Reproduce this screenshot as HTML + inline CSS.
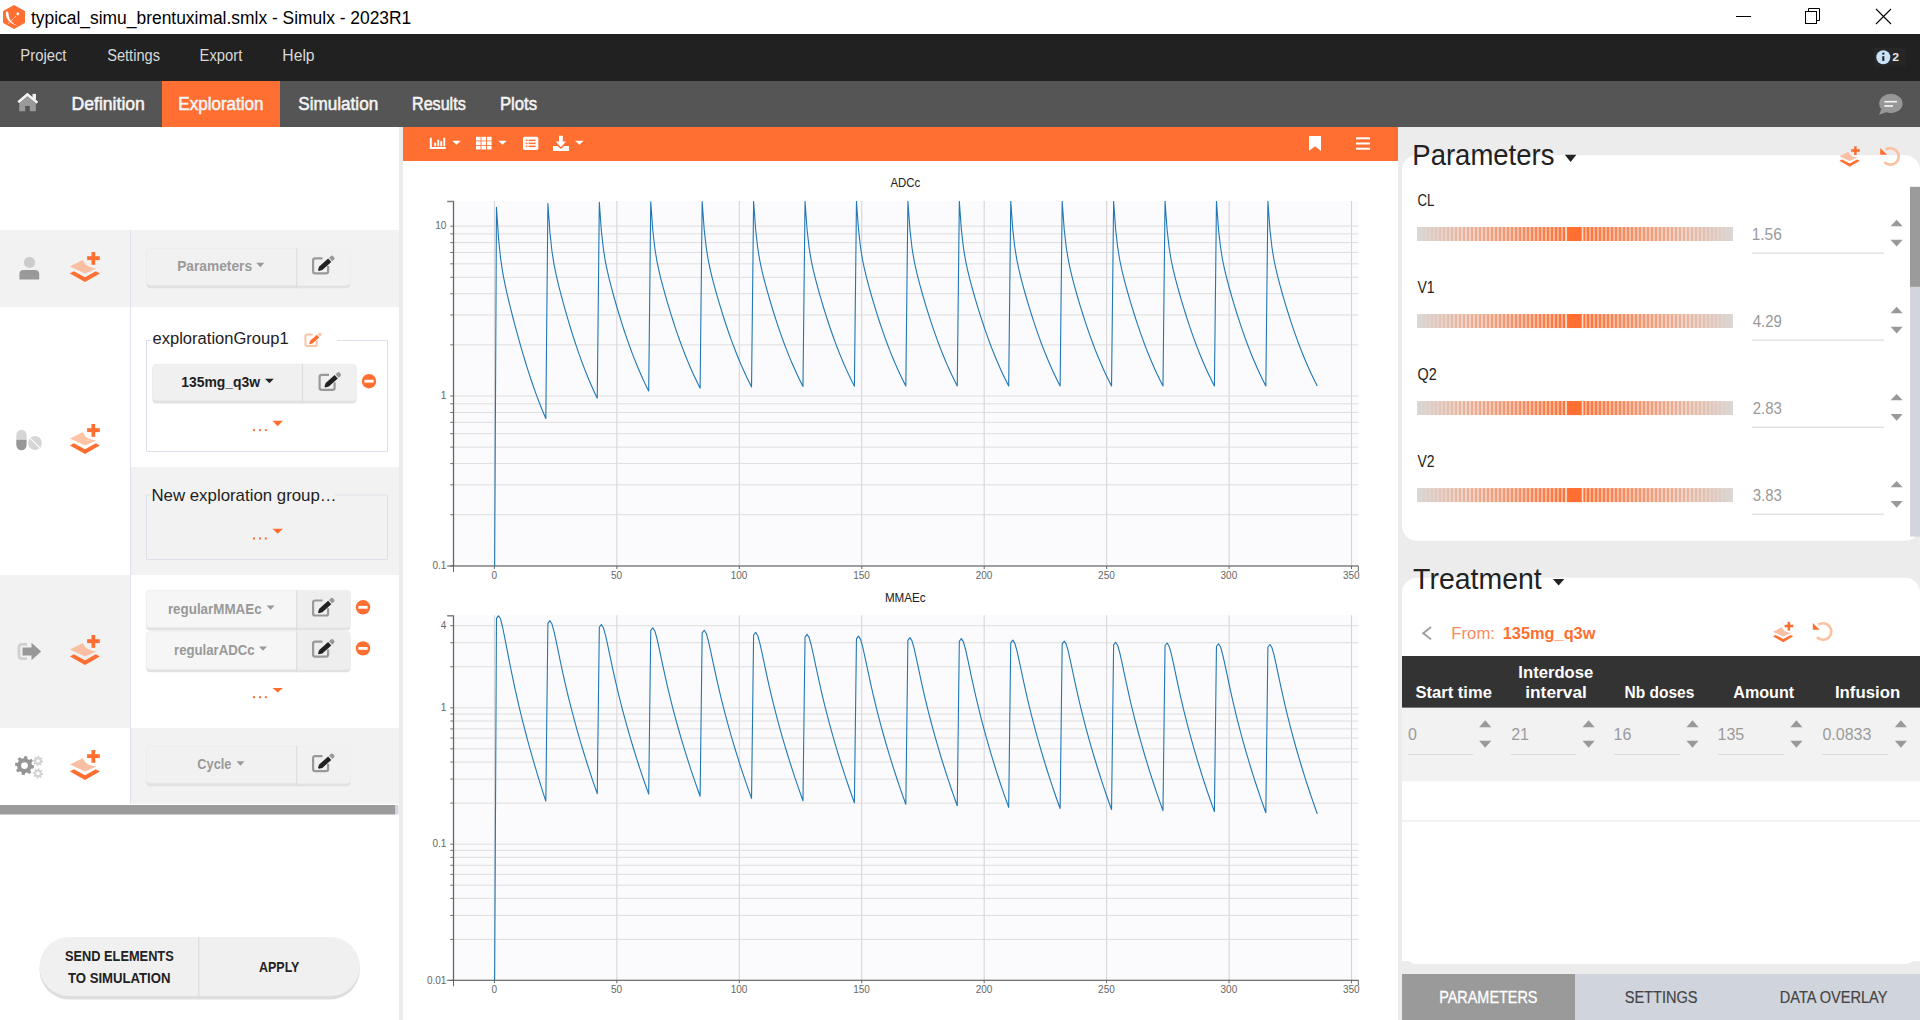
<!DOCTYPE html>
<html><head><meta charset="utf-8"><title>Simulx - Exploration</title>
<style>
html,body{margin:0;padding:0;width:1920px;height:1020px;overflow:hidden;background:#fff}
svg{position:absolute;left:0;top:0;font-family:"Liberation Sans",sans-serif}
</style></head><body>
<svg width="1920" height="1020" viewBox="0 0 1920 1020">
<polygon points="14,5.5 24.5,11.3 24.5,22.7 14,28.5 3.5,22.7 3.5,11.3" fill="#ff6f32" stroke="#ff6f32" stroke-width="1" stroke-linejoin="round"/>
<path d="M5.9,12.8 C5.5,18.5 9,23.8 18.6,26.0 C11.8,23.6 8.9,19.5 8.5,13.2 C8.4,11.3 6.1,11.0 5.9,12.8 Z" fill="#fff"/>
<line x1="7.9" y1="23.9" x2="16.2" y2="16.0" stroke="#fff" stroke-width="0.8" stroke-dasharray="1.2,0.8"/>
<circle cx="17.8" cy="13.9" r="1.4" fill="#fff"/>
<line x1="1736" y1="16.5" x2="1751" y2="16.5" stroke="#000" stroke-width="1"/>
<rect x="1805.5" y="11.5" width="11" height="12" fill="none" stroke="#000" stroke-width="1"/>
<path d="M1808.5,11.5 V8.5 H1819.5 V20.5 H1816.5" fill="none" stroke="#000" stroke-width="1"/>
<path d="M1876,9 L1891,24 M1891,9 L1876,24" stroke="#000" stroke-width="1.1"/>
<rect x="0" y="34" width="1920" height="47" fill="#212121"/>
<rect x="1874" y="47.5" width="32" height="19" fill="#262626"/>
<circle cx="1883.3" cy="57.2" r="7" fill="#c7e3f5"/>
<rect x="1882.25" y="56.2" width="2.1" height="4.7" fill="#222"/>
<circle cx="1883.3" cy="53.7" r="1.15" fill="#222"/>
<rect x="0" y="81" width="1920" height="46" fill="#555555"/>
<rect x="162" y="81" width="118" height="46" fill="#ff6f32"/>
<path d="M19.2,103.6 L27.4,96.4 L35.9,103.6 V111.3 H29.8 V105.9 H25.2 V111.3 H19.2 Z" fill="#9a9a9a"/>
<rect x="32.5" y="93.9" width="3.5" height="5.6" fill="#f2f2f2"/>
<path d="M18.3,102.3 L27.4,94.5 L37.4,102.8" fill="none" stroke="#f4f4f4" stroke-width="2.7"/>
<ellipse cx="1890.9" cy="103.5" rx="11.7" ry="9.7" fill="#979797"/>
<path d="M1881.5,108.5 L1879.2,114.8 L1887.5,111.8 Z" fill="#979797"/>
<rect x="1884.4" y="100.9" width="12.6" height="1.6" fill="#f4f4f4"/><rect x="1884.4" y="105.1" width="8.6" height="1.7" fill="#f4f4f4"/>
<rect x="0" y="127" width="399" height="893" fill="#ffffff"/>
<rect x="399" y="127" width="4" height="893" fill="#ebebeb"/>
<rect x="0" y="230" width="399" height="77" fill="#f2f2f2"/>
<rect x="131" y="467" width="268" height="108" fill="#f2f2f2"/>
<rect x="0" y="575" width="130" height="153" fill="#f2f2f2"/>
<rect x="131" y="728" width="268" height="76" fill="#f2f2f2"/>
<rect x="130" y="230" width="1" height="574" fill="#dfe2ea"/>
<rect x="0" y="805" width="395" height="9.5" fill="#9b9b9b"/>
<rect x="395" y="805" width="3.5" height="9.5" fill="#d2d6de"/>
<circle cx="29.5" cy="262.4" r="5.6" fill="#cccccc"/>
<path d="M19.4,279.6 V274 C19.4,271.6 21,270 23.4,270 H35.2 C37.6,270 39.2,271.6 39.2,274 V279.6 Z" fill="#999"/>
<g transform="translate(70,252) scale(1.0)"><rect x="21.5" y="0" width="3.7" height="12.8" fill="#ff6f32"/><rect x="17.1" y="4.2" width="12.7" height="3.9" fill="#ff6f32"/><path d="M-0.1,14.6 L12.9,8.1 C14.5,12.5 18,15.8 26.5,16.4 L15,21.6 Z" fill="#f8bfa3"/><path d="M-0.1,21.4 L3.8,19.3 L15,25.3 L25.8,19.3 L29.8,21.4 L15,30 Z" fill="#ff6f32"/></g>
<rect x="146.5" y="251.3" width="203.8" height="37.0" rx="4" fill="#e2e2e2"/>
<rect x="146.5" y="248.3" width="203.8" height="37.0" rx="4" fill="#f1f1f1" stroke="#e9e9e9" stroke-width="0.6"/>
<path d="M296.1,248.3 H346.3 A4,4 0 0 1 350.3,252.3 V281.3 A4,4 0 0 1 346.3,285.3 H296.1 Z" fill="#f1f1f1"/>
<rect x="296.1" y="248.3" width="1.2" height="40.0" fill="#dedede"/>
<path d="M256.3,262.85 H264.3 L260.3,267.15 Z" fill="#999"/>
<g transform="translate(312,257.2) scale(1.0)"><path d="M10.5,1.1 H3.2 Q1.1,1.1 1.1,3.2 V14 Q1.1,16.1 3.2,16.1 H14 Q16.1,16.1 16.1,14 V8.8" fill="none" stroke="#999" stroke-width="2.2"/><path d="M6.80,13.75 L10.35,12.91 L19.27,4.88 L16.13,1.38 L7.21,9.41 L6.00,12.85 Z" fill="#222"/><path d="M20.16,4.08 L22.24,2.20 Q23.28,1.27 21.71,-0.48 Q20.14,-2.23 19.10,-1.29 L17.02,0.58 Z" fill="#999"/></g>
<path d="M151,340.5 H146.5 V451.5 H387.5 V340.5 H337" fill="none" stroke="#dde0e8" stroke-width="1"/>
<g transform="translate(304.6,333.7) scale(0.76)"><path d="M10.5,1.1 H3.2 Q1.1,1.1 1.1,3.2 V14 Q1.1,16.1 3.2,16.1 H14 Q16.1,16.1 16.1,14 V8.8" fill="none" stroke="#fcc3a8" stroke-width="2.6"/><path d="M6.80,13.75 L10.35,12.91 L19.27,4.88 L16.13,1.38 L7.21,9.41 L6.00,12.85 Z" fill="#ff6f32"/><path d="M20.16,4.08 L22.24,2.20 Q23.28,1.27 21.71,-0.48 Q20.14,-2.23 19.10,-1.29 L17.02,0.58 Z" fill="#fcc3a8"/></g>
<rect x="152.5" y="367.1" width="204.0" height="36.5" rx="4" fill="#e2e2e2"/>
<rect x="152.5" y="364.1" width="204.0" height="36.5" rx="4" fill="#f0f0f0" stroke="#e9e9e9" stroke-width="0.6"/>
<path d="M301.8,364.1 H352.5 A4,4 0 0 1 356.5,368.1 V396.6 A4,4 0 0 1 352.5,400.6 H301.8 Z" fill="#f0f0f0"/>
<rect x="301.8" y="364.1" width="1.2" height="39.5" fill="#dedede"/>
<path d="M265.0,378.8 H273.79999999999995 L269.4,383.2 Z" fill="#222"/>
<g transform="translate(318.5,373.7) scale(1.0)"><path d="M10.5,1.1 H3.2 Q1.1,1.1 1.1,3.2 V14 Q1.1,16.1 3.2,16.1 H14 Q16.1,16.1 16.1,14 V8.8" fill="none" stroke="#999" stroke-width="2.2"/><path d="M6.80,13.75 L10.35,12.91 L19.27,4.88 L16.13,1.38 L7.21,9.41 L6.00,12.85 Z" fill="#222"/><path d="M20.16,4.08 L22.24,2.20 Q23.28,1.27 21.71,-0.48 Q20.14,-2.23 19.10,-1.29 L17.02,0.58 Z" fill="#999"/></g>
<circle cx="369" cy="381.2" r="7.2" fill="#ff6f32"/><rect x="364.4" y="379.8" width="9.2" height="2.8" fill="#fff"/>
<rect x="253.0" y="429.1" width="2" height="2" fill="#ff6f32"/>
<rect x="258.9" y="429.1" width="2" height="2" fill="#ff6f32"/>
<rect x="264.8" y="429.1" width="2" height="2" fill="#ff6f32"/>
<path d="M272.4,420.75 H283.0 L277.7,426.25 Z" fill="#ff6f32"/>
<path d="M16.3,435 A5.15,5.15 0 0 1 26.6,435 V439.7 H16.3 Z" fill="#d6d6d6"/>
<path d="M16.3,439.7 H26.6 V445 A5.15,5.15 0 0 1 16.3,445 Z" fill="#979797"/>
<circle cx="35" cy="443" r="6.9" fill="#d6d6d6"/>
<line x1="30.3" y1="438.3" x2="39.7" y2="447.7" stroke="#fff" stroke-width="1.1"/>
<g transform="translate(70,424) scale(1.0)"><rect x="21.5" y="0" width="3.7" height="12.8" fill="#ff6f32"/><rect x="17.1" y="4.2" width="12.7" height="3.9" fill="#ff6f32"/><path d="M-0.1,14.6 L12.9,8.1 C14.5,12.5 18,15.8 26.5,16.4 L15,21.6 Z" fill="#ffc4a8"/><path d="M-0.1,21.4 L3.8,19.3 L15,25.3 L25.8,19.3 L29.8,21.4 L15,30 Z" fill="#ff6f32"/></g>
<path d="M151,495 H146.5 V559.5 H387.5 V495 H335" fill="none" stroke="#dde0e8" stroke-width="1"/>
<rect x="253.0" y="537.5" width="2" height="2" fill="#ff6f32"/>
<rect x="258.9" y="537.5" width="2" height="2" fill="#ff6f32"/>
<rect x="264.8" y="537.5" width="2" height="2" fill="#ff6f32"/>
<path d="M272.4,528.7 H283.0 L277.7,533.7 Z" fill="#ff6f32"/>
<path d="M27,644.3 H22 Q19,644.3 19,647.3 V655.7 Q19,658.7 22,658.7 H27" fill="none" stroke="#d0d0d0" stroke-width="2.8"/>
<path d="M22.5,647.6 H31.5 V642.8 L41.2,651.5 L31.5,660.2 V655.4 H22.5 Z" fill="#999"/>
<g transform="translate(70,635) scale(1.0)"><rect x="21.5" y="0" width="3.7" height="12.8" fill="#ff6f32"/><rect x="17.1" y="4.2" width="12.7" height="3.9" fill="#ff6f32"/><path d="M-0.1,14.6 L12.9,8.1 C14.5,12.5 18,15.8 26.5,16.4 L15,21.6 Z" fill="#f8bfa3"/><path d="M-0.1,21.4 L3.8,19.3 L15,25.3 L25.8,19.3 L29.8,21.4 L15,30 Z" fill="#ff6f32"/></g>
<rect x="146.3" y="593.3" width="204.2" height="37.30000000000007" rx="4" fill="#e2e2e2"/>
<rect x="146.3" y="590.3" width="204.2" height="37.30000000000007" rx="4" fill="#f6f6f6" stroke="#e9e9e9" stroke-width="0.6"/>
<path d="M296,590.3 H346.5 A4,4 0 0 1 350.5,594.3 V623.6 A4,4 0 0 1 346.5,627.6 H296 Z" fill="#eeeeee"/>
<rect x="296" y="590.3" width="1.2" height="40.30000000000007" fill="#dedede"/>
<path d="M266.6,605.45 H274.6 L270.6,609.75 Z" fill="#999"/>
<g transform="translate(312,599.4) scale(1.0)"><path d="M10.5,1.1 H3.2 Q1.1,1.1 1.1,3.2 V14 Q1.1,16.1 3.2,16.1 H14 Q16.1,16.1 16.1,14 V8.8" fill="none" stroke="#999" stroke-width="2.2"/><path d="M6.80,13.75 L10.35,12.91 L19.27,4.88 L16.13,1.38 L7.21,9.41 L6.00,12.85 Z" fill="#222"/><path d="M20.16,4.08 L22.24,2.20 Q23.28,1.27 21.71,-0.48 Q20.14,-2.23 19.10,-1.29 L17.02,0.58 Z" fill="#999"/></g>
<circle cx="363" cy="607.3" r="7.2" fill="#ff6f32"/><rect x="358.4" y="605.9" width="9.2" height="2.8" fill="#fff"/>
<rect x="146.3" y="634.3" width="204.2" height="38.0" rx="4" fill="#e2e2e2"/>
<rect x="146.3" y="631.3" width="204.2" height="38.0" rx="4" fill="#f6f6f6" stroke="#e9e9e9" stroke-width="0.6"/>
<path d="M296,631.3 H346.5 A4,4 0 0 1 350.5,635.3 V665.3 A4,4 0 0 1 346.5,669.3 H296 Z" fill="#eeeeee"/>
<rect x="296" y="631.3" width="1.2" height="41.0" fill="#dedede"/>
<path d="M259.0,646.45 H267.0 L263,650.75 Z" fill="#999"/>
<g transform="translate(312,640.6) scale(1.0)"><path d="M10.5,1.1 H3.2 Q1.1,1.1 1.1,3.2 V14 Q1.1,16.1 3.2,16.1 H14 Q16.1,16.1 16.1,14 V8.8" fill="none" stroke="#999" stroke-width="2.2"/><path d="M6.80,13.75 L10.35,12.91 L19.27,4.88 L16.13,1.38 L7.21,9.41 L6.00,12.85 Z" fill="#222"/><path d="M20.16,4.08 L22.24,2.20 Q23.28,1.27 21.71,-0.48 Q20.14,-2.23 19.10,-1.29 L17.02,0.58 Z" fill="#999"/></g>
<circle cx="363" cy="648.4" r="7.2" fill="#ff6f32"/><rect x="358.4" y="647.0" width="9.2" height="2.8" fill="#fff"/>
<rect x="253.0" y="696.2" width="2" height="2" fill="#ff6f32"/>
<rect x="258.9" y="696.2" width="2" height="2" fill="#ff6f32"/>
<rect x="264.8" y="696.2" width="2" height="2" fill="#ff6f32"/>
<path d="M272.45,688.0 H282.95 L277.7,692.5999999999999 Z" fill="#ff6f32"/>
<polygon points="24.50,756.00 27.29,756.41 27.33,758.76 29.19,759.88 31.29,758.81 32.97,761.07 31.34,762.77 31.86,764.87 34.10,765.60 33.69,768.39 31.34,768.43 30.22,770.29 31.29,772.39 29.03,774.07 27.33,772.44 25.23,772.96 24.50,775.20 21.71,774.79 21.67,772.44 19.81,771.32 17.71,772.39 16.03,770.13 17.66,768.43 17.14,766.33 14.90,765.60 15.31,762.81 17.66,762.77 18.78,760.91 17.71,758.81 19.97,757.13 21.67,758.76 23.77,758.24" fill="#959595"/>
<circle cx="24.5" cy="765.6" r="3.4" fill="#fff"/>
<polygon points="38.00,755.80 39.51,756.02 39.49,757.40 40.47,757.99 41.68,757.32 42.59,758.55 41.60,759.51 41.88,760.62 43.20,761.00 42.98,762.51 41.60,762.49 41.01,763.47 41.68,764.68 40.45,765.59 39.49,764.60 38.38,764.88 38.00,766.20 36.49,765.98 36.51,764.60 35.53,764.01 34.32,764.68 33.41,763.45 34.40,762.49 34.12,761.38 32.80,761.00 33.02,759.49 34.40,759.51 34.99,758.53 34.32,757.32 35.55,756.41 36.51,757.40 37.62,757.12" fill="#d2d2d2"/>
<circle cx="38" cy="761" r="1.8" fill="#fff"/>
<polygon points="38.00,768.20 39.51,768.42 39.49,769.80 40.47,770.39 41.68,769.72 42.59,770.95 41.60,771.91 41.88,773.02 43.20,773.40 42.98,774.91 41.60,774.89 41.01,775.87 41.68,777.08 40.45,777.99 39.49,777.00 38.38,777.28 38.00,778.60 36.49,778.38 36.51,777.00 35.53,776.41 34.32,777.08 33.41,775.85 34.40,774.89 34.12,773.78 32.80,773.40 33.02,771.89 34.40,771.91 34.99,770.93 34.32,769.72 35.55,768.81 36.51,769.80 37.62,769.52" fill="#d2d2d2"/>
<circle cx="38" cy="773.4" r="1.8" fill="#fff"/>
<g transform="translate(70,750) scale(1.0)"><rect x="21.5" y="0" width="3.7" height="12.8" fill="#ff6f32"/><rect x="17.1" y="4.2" width="12.7" height="3.9" fill="#ff6f32"/><path d="M-0.1,14.6 L12.9,8.1 C14.5,12.5 18,15.8 26.5,16.4 L15,21.6 Z" fill="#f8bfa3"/><path d="M-0.1,21.4 L3.8,19.3 L15,25.3 L25.8,19.3 L29.8,21.4 L15,30 Z" fill="#ff6f32"/></g>
<rect x="146.3" y="749" width="204.2" height="37.200000000000045" rx="4" fill="#e2e2e2"/>
<rect x="146.3" y="746" width="204.2" height="37.200000000000045" rx="4" fill="#f1f1f1" stroke="#e9e9e9" stroke-width="0.6"/>
<path d="M296,746 H346.5 A4,4 0 0 1 350.5,750 V779.2 A4,4 0 0 1 346.5,783.2 H296 Z" fill="#f1f1f1"/>
<rect x="296" y="746" width="1.2" height="40.200000000000045" fill="#dedede"/>
<path d="M236.5,761.35 H244.5 L240.5,765.65 Z" fill="#999"/>
<g transform="translate(312,755) scale(1.0)"><path d="M10.5,1.1 H3.2 Q1.1,1.1 1.1,3.2 V14 Q1.1,16.1 3.2,16.1 H14 Q16.1,16.1 16.1,14 V8.8" fill="none" stroke="#999" stroke-width="2.2"/><path d="M6.80,13.75 L10.35,12.91 L19.27,4.88 L16.13,1.38 L7.21,9.41 L6.00,12.85 Z" fill="#222"/><path d="M20.16,4.08 L22.24,2.20 Q23.28,1.27 21.71,-0.48 Q20.14,-2.23 19.10,-1.29 L17.02,0.58 Z" fill="#999"/></g>
<rect x="39.5" y="940" width="320.3" height="59.4" rx="29.7" fill="#dedede"/>
<rect x="39.5" y="937" width="320.3" height="59" rx="29.5" fill="#f0f0f0"/>
<rect x="198.2" y="937" width="1.2" height="59" fill="#dcdcdc"/>
<rect x="403" y="127" width="995" height="34" fill="#ff6f32"/>
<path d="M430.8,137.8 V148 H445.8" fill="none" stroke="#ffffff" stroke-width="2"/>
<rect x="434.2" y="142.7" width="1.9" height="3.5" fill="#ffffff"/>
<rect x="437.3" y="139.7" width="1.9" height="6.5" fill="#ffffff"/>
<rect x="440.3" y="141.2" width="1.9" height="5" fill="#ffffff"/>
<rect x="443.3" y="137.7" width="1.9" height="8.5" fill="#ffffff"/>
<path d="M452.25,140.8 H460.75 L456.5,144.8 Z" fill="#ffffff"/>
<rect x="476.0" y="136.8" width="4.6" height="3.7" fill="#ffffff"/>
<rect x="476.0" y="141.3" width="4.6" height="3.7" fill="#ffffff"/>
<rect x="476.0" y="145.8" width="4.6" height="3.7" fill="#ffffff"/>
<rect x="481.5" y="136.8" width="4.6" height="3.7" fill="#ffffff"/>
<rect x="481.5" y="141.3" width="4.6" height="3.7" fill="#ffffff"/>
<rect x="481.5" y="145.8" width="4.6" height="3.7" fill="#ffffff"/>
<rect x="487.0" y="136.8" width="4.6" height="3.7" fill="#ffffff"/>
<rect x="487.0" y="141.3" width="4.6" height="3.7" fill="#ffffff"/>
<rect x="487.0" y="145.8" width="4.6" height="3.7" fill="#ffffff"/>
<path d="M498.25,140.8 H506.75 L502.5,144.8 Z" fill="#ffffff"/>
<rect x="523" y="136.7" width="15.3" height="13.3" rx="1.8" fill="#ffffff"/>
<rect x="525.8" y="139.6" width="1.6" height="1.5" fill="#ff6f32"/><rect x="528.6" y="139.6" width="7" height="1.5" fill="#ff6f32"/>
<rect x="525.8" y="142.6" width="1.6" height="1.5" fill="#ff6f32"/><rect x="528.6" y="142.6" width="7" height="1.5" fill="#ff6f32"/>
<rect x="525.8" y="145.6" width="1.6" height="1.5" fill="#ff6f32"/><rect x="528.6" y="145.6" width="7" height="1.5" fill="#ff6f32"/>
<path d="M559,135.7 H562.8 V141.5 H566 L560.9,147.2 L555.8,141.5 H559 Z" fill="#ffffff"/>
<path d="M553,146 H557.6 L560.9,149 L564.2,146 H568.9 V151 H553 Z" fill="#ffffff"/>
<path d="M575.15,140.8 H583.65 L579.4,144.8 Z" fill="#ffffff"/>
<path d="M1309,136 H1321 V151 L1315,146.3 L1309,151 Z" fill="#ffffff"/>
<rect x="1356" y="137.3" width="14" height="2" fill="#ffffff"/>
<rect x="1356" y="142.5" width="14" height="2" fill="#ffffff"/>
<rect x="1356" y="147.7" width="14" height="2" fill="#ffffff"/>
<rect x="453.5" y="201" width="904.8" height="365" fill="#fbfbfd"/>
<line x1="494.40" y1="201" x2="494.40" y2="566" stroke="#d3d3d7" stroke-width="1"/>
<line x1="616.85" y1="201" x2="616.85" y2="566" stroke="#d3d3d7" stroke-width="1"/>
<line x1="739.30" y1="201" x2="739.30" y2="566" stroke="#d3d3d7" stroke-width="1"/>
<line x1="861.75" y1="201" x2="861.75" y2="566" stroke="#d3d3d7" stroke-width="1"/>
<line x1="984.20" y1="201" x2="984.20" y2="566" stroke="#d3d3d7" stroke-width="1"/>
<line x1="1106.65" y1="201" x2="1106.65" y2="566" stroke="#d3d3d7" stroke-width="1"/>
<line x1="1229.10" y1="201" x2="1229.10" y2="566" stroke="#d3d3d7" stroke-width="1"/>
<line x1="1351.55" y1="201" x2="1351.55" y2="566" stroke="#d3d3d7" stroke-width="1"/>
<line x1="453.5" y1="565.85" x2="1358.3" y2="565.85" stroke="#dedede" stroke-width="1"/>
<line x1="450.2" y1="565.85" x2="453.5" y2="565.85" stroke="#777" stroke-width="1"/>
<line x1="453.5" y1="514.72" x2="1358.3" y2="514.72" stroke="#dedede" stroke-width="1"/>
<line x1="450.2" y1="514.72" x2="453.5" y2="514.72" stroke="#777" stroke-width="1"/>
<line x1="453.5" y1="484.81" x2="1358.3" y2="484.81" stroke="#dedede" stroke-width="1"/>
<line x1="450.2" y1="484.81" x2="453.5" y2="484.81" stroke="#777" stroke-width="1"/>
<line x1="453.5" y1="463.59" x2="1358.3" y2="463.59" stroke="#dedede" stroke-width="1"/>
<line x1="450.2" y1="463.59" x2="453.5" y2="463.59" stroke="#777" stroke-width="1"/>
<line x1="453.5" y1="447.13" x2="1358.3" y2="447.13" stroke="#dedede" stroke-width="1"/>
<line x1="450.2" y1="447.13" x2="453.5" y2="447.13" stroke="#777" stroke-width="1"/>
<line x1="453.5" y1="433.68" x2="1358.3" y2="433.68" stroke="#dedede" stroke-width="1"/>
<line x1="450.2" y1="433.68" x2="453.5" y2="433.68" stroke="#777" stroke-width="1"/>
<line x1="453.5" y1="422.31" x2="1358.3" y2="422.31" stroke="#dedede" stroke-width="1"/>
<line x1="450.2" y1="422.31" x2="453.5" y2="422.31" stroke="#777" stroke-width="1"/>
<line x1="453.5" y1="412.46" x2="1358.3" y2="412.46" stroke="#dedede" stroke-width="1"/>
<line x1="450.2" y1="412.46" x2="453.5" y2="412.46" stroke="#777" stroke-width="1"/>
<line x1="453.5" y1="403.77" x2="1358.3" y2="403.77" stroke="#dedede" stroke-width="1"/>
<line x1="450.2" y1="403.77" x2="453.5" y2="403.77" stroke="#777" stroke-width="1"/>
<line x1="453.5" y1="396.00" x2="1358.3" y2="396.00" stroke="#dedede" stroke-width="1"/>
<line x1="450.2" y1="396.00" x2="453.5" y2="396.00" stroke="#777" stroke-width="1"/>
<line x1="453.5" y1="344.87" x2="1358.3" y2="344.87" stroke="#dedede" stroke-width="1"/>
<line x1="450.2" y1="344.87" x2="453.5" y2="344.87" stroke="#777" stroke-width="1"/>
<line x1="453.5" y1="314.96" x2="1358.3" y2="314.96" stroke="#dedede" stroke-width="1"/>
<line x1="450.2" y1="314.96" x2="453.5" y2="314.96" stroke="#777" stroke-width="1"/>
<line x1="453.5" y1="293.74" x2="1358.3" y2="293.74" stroke="#dedede" stroke-width="1"/>
<line x1="450.2" y1="293.74" x2="453.5" y2="293.74" stroke="#777" stroke-width="1"/>
<line x1="453.5" y1="277.28" x2="1358.3" y2="277.28" stroke="#dedede" stroke-width="1"/>
<line x1="450.2" y1="277.28" x2="453.5" y2="277.28" stroke="#777" stroke-width="1"/>
<line x1="453.5" y1="263.83" x2="1358.3" y2="263.83" stroke="#dedede" stroke-width="1"/>
<line x1="450.2" y1="263.83" x2="453.5" y2="263.83" stroke="#777" stroke-width="1"/>
<line x1="453.5" y1="252.46" x2="1358.3" y2="252.46" stroke="#dedede" stroke-width="1"/>
<line x1="450.2" y1="252.46" x2="453.5" y2="252.46" stroke="#777" stroke-width="1"/>
<line x1="453.5" y1="242.61" x2="1358.3" y2="242.61" stroke="#dedede" stroke-width="1"/>
<line x1="450.2" y1="242.61" x2="453.5" y2="242.61" stroke="#777" stroke-width="1"/>
<line x1="453.5" y1="233.92" x2="1358.3" y2="233.92" stroke="#dedede" stroke-width="1"/>
<line x1="450.2" y1="233.92" x2="453.5" y2="233.92" stroke="#777" stroke-width="1"/>
<line x1="453.5" y1="226.15" x2="1358.3" y2="226.15" stroke="#dedede" stroke-width="1"/>
<line x1="450.2" y1="226.15" x2="453.5" y2="226.15" stroke="#777" stroke-width="1"/>
<line x1="453.5" y1="201" x2="453.5" y2="566" stroke="#666" stroke-width="1.3"/>
<line x1="447.2" y1="201.5" x2="453.5" y2="201.5" stroke="#888" stroke-width="1.6"/>
<line x1="447.2" y1="566" x2="1358.3" y2="566" stroke="#505050" stroke-width="1.05"/>
<line x1="453.5" y1="566" x2="453.5" y2="572" stroke="#666" stroke-width="1"/>
<line x1="1358.3" y1="566" x2="1358.3" y2="571" stroke="#666" stroke-width="1"/>
<line x1="494.40" y1="566" x2="494.40" y2="569" stroke="#666" stroke-width="1"/>
<line x1="616.85" y1="566" x2="616.85" y2="569" stroke="#666" stroke-width="1"/>
<line x1="739.30" y1="566" x2="739.30" y2="569" stroke="#666" stroke-width="1"/>
<line x1="861.75" y1="566" x2="861.75" y2="569" stroke="#666" stroke-width="1"/>
<line x1="984.20" y1="566" x2="984.20" y2="569" stroke="#666" stroke-width="1"/>
<line x1="1106.65" y1="566" x2="1106.65" y2="569" stroke="#666" stroke-width="1"/>
<line x1="1229.10" y1="566" x2="1229.10" y2="569" stroke="#666" stroke-width="1"/>
<line x1="1351.55" y1="566" x2="1351.55" y2="569" stroke="#666" stroke-width="1"/>
<clipPath id="c1"><rect x="453.5" y="201" width="904.8" height="365"/></clipPath>
<rect x="453.5" y="615.3" width="904.8" height="364.9000000000001" fill="#fbfbfd"/>
<line x1="494.40" y1="615.3" x2="494.40" y2="980.2" stroke="#d3d3d7" stroke-width="1"/>
<line x1="616.85" y1="615.3" x2="616.85" y2="980.2" stroke="#d3d3d7" stroke-width="1"/>
<line x1="739.30" y1="615.3" x2="739.30" y2="980.2" stroke="#d3d3d7" stroke-width="1"/>
<line x1="861.75" y1="615.3" x2="861.75" y2="980.2" stroke="#d3d3d7" stroke-width="1"/>
<line x1="984.20" y1="615.3" x2="984.20" y2="980.2" stroke="#d3d3d7" stroke-width="1"/>
<line x1="1106.65" y1="615.3" x2="1106.65" y2="980.2" stroke="#d3d3d7" stroke-width="1"/>
<line x1="1229.10" y1="615.3" x2="1229.10" y2="980.2" stroke="#d3d3d7" stroke-width="1"/>
<line x1="1351.55" y1="615.3" x2="1351.55" y2="980.2" stroke="#d3d3d7" stroke-width="1"/>
<line x1="453.5" y1="980.50" x2="1358.3" y2="980.50" stroke="#dedede" stroke-width="1"/>
<line x1="450.2" y1="980.50" x2="453.5" y2="980.50" stroke="#777" stroke-width="1"/>
<line x1="453.5" y1="939.45" x2="1358.3" y2="939.45" stroke="#dedede" stroke-width="1"/>
<line x1="450.2" y1="939.45" x2="453.5" y2="939.45" stroke="#777" stroke-width="1"/>
<line x1="453.5" y1="915.44" x2="1358.3" y2="915.44" stroke="#dedede" stroke-width="1"/>
<line x1="450.2" y1="915.44" x2="453.5" y2="915.44" stroke="#777" stroke-width="1"/>
<line x1="453.5" y1="898.41" x2="1358.3" y2="898.41" stroke="#dedede" stroke-width="1"/>
<line x1="450.2" y1="898.41" x2="453.5" y2="898.41" stroke="#777" stroke-width="1"/>
<line x1="453.5" y1="885.20" x2="1358.3" y2="885.20" stroke="#dedede" stroke-width="1"/>
<line x1="450.2" y1="885.20" x2="453.5" y2="885.20" stroke="#777" stroke-width="1"/>
<line x1="453.5" y1="874.40" x2="1358.3" y2="874.40" stroke="#dedede" stroke-width="1"/>
<line x1="450.2" y1="874.40" x2="453.5" y2="874.40" stroke="#777" stroke-width="1"/>
<line x1="453.5" y1="865.27" x2="1358.3" y2="865.27" stroke="#dedede" stroke-width="1"/>
<line x1="450.2" y1="865.27" x2="453.5" y2="865.27" stroke="#777" stroke-width="1"/>
<line x1="453.5" y1="857.36" x2="1358.3" y2="857.36" stroke="#dedede" stroke-width="1"/>
<line x1="450.2" y1="857.36" x2="453.5" y2="857.36" stroke="#777" stroke-width="1"/>
<line x1="453.5" y1="850.39" x2="1358.3" y2="850.39" stroke="#dedede" stroke-width="1"/>
<line x1="450.2" y1="850.39" x2="453.5" y2="850.39" stroke="#777" stroke-width="1"/>
<line x1="453.5" y1="844.15" x2="1358.3" y2="844.15" stroke="#dedede" stroke-width="1"/>
<line x1="450.2" y1="844.15" x2="453.5" y2="844.15" stroke="#777" stroke-width="1"/>
<line x1="453.5" y1="803.10" x2="1358.3" y2="803.10" stroke="#dedede" stroke-width="1"/>
<line x1="450.2" y1="803.10" x2="453.5" y2="803.10" stroke="#777" stroke-width="1"/>
<line x1="453.5" y1="779.09" x2="1358.3" y2="779.09" stroke="#dedede" stroke-width="1"/>
<line x1="450.2" y1="779.09" x2="453.5" y2="779.09" stroke="#777" stroke-width="1"/>
<line x1="453.5" y1="762.06" x2="1358.3" y2="762.06" stroke="#dedede" stroke-width="1"/>
<line x1="450.2" y1="762.06" x2="453.5" y2="762.06" stroke="#777" stroke-width="1"/>
<line x1="453.5" y1="748.85" x2="1358.3" y2="748.85" stroke="#dedede" stroke-width="1"/>
<line x1="450.2" y1="748.85" x2="453.5" y2="748.85" stroke="#777" stroke-width="1"/>
<line x1="453.5" y1="738.05" x2="1358.3" y2="738.05" stroke="#dedede" stroke-width="1"/>
<line x1="450.2" y1="738.05" x2="453.5" y2="738.05" stroke="#777" stroke-width="1"/>
<line x1="453.5" y1="728.92" x2="1358.3" y2="728.92" stroke="#dedede" stroke-width="1"/>
<line x1="450.2" y1="728.92" x2="453.5" y2="728.92" stroke="#777" stroke-width="1"/>
<line x1="453.5" y1="721.01" x2="1358.3" y2="721.01" stroke="#dedede" stroke-width="1"/>
<line x1="450.2" y1="721.01" x2="453.5" y2="721.01" stroke="#777" stroke-width="1"/>
<line x1="453.5" y1="714.04" x2="1358.3" y2="714.04" stroke="#dedede" stroke-width="1"/>
<line x1="450.2" y1="714.04" x2="453.5" y2="714.04" stroke="#777" stroke-width="1"/>
<line x1="453.5" y1="707.80" x2="1358.3" y2="707.80" stroke="#dedede" stroke-width="1"/>
<line x1="450.2" y1="707.80" x2="453.5" y2="707.80" stroke="#777" stroke-width="1"/>
<line x1="453.5" y1="666.75" x2="1358.3" y2="666.75" stroke="#dedede" stroke-width="1"/>
<line x1="450.2" y1="666.75" x2="453.5" y2="666.75" stroke="#777" stroke-width="1"/>
<line x1="453.5" y1="642.74" x2="1358.3" y2="642.74" stroke="#dedede" stroke-width="1"/>
<line x1="450.2" y1="642.74" x2="453.5" y2="642.74" stroke="#777" stroke-width="1"/>
<line x1="453.5" y1="625.71" x2="1358.3" y2="625.71" stroke="#dedede" stroke-width="1"/>
<line x1="450.2" y1="625.71" x2="453.5" y2="625.71" stroke="#777" stroke-width="1"/>
<line x1="453.5" y1="615.3" x2="453.5" y2="980.2" stroke="#666" stroke-width="1.3"/>
<line x1="447.2" y1="615.8" x2="453.5" y2="615.8" stroke="#888" stroke-width="1.6"/>
<line x1="447.2" y1="980.2" x2="1358.3" y2="980.2" stroke="#505050" stroke-width="1.05"/>
<line x1="453.5" y1="980.2" x2="453.5" y2="986.2" stroke="#666" stroke-width="1"/>
<line x1="1358.3" y1="980.2" x2="1358.3" y2="985.2" stroke="#666" stroke-width="1"/>
<line x1="494.40" y1="980.2" x2="494.40" y2="983.2" stroke="#666" stroke-width="1"/>
<line x1="616.85" y1="980.2" x2="616.85" y2="983.2" stroke="#666" stroke-width="1"/>
<line x1="739.30" y1="980.2" x2="739.30" y2="983.2" stroke="#666" stroke-width="1"/>
<line x1="861.75" y1="980.2" x2="861.75" y2="983.2" stroke="#666" stroke-width="1"/>
<line x1="984.20" y1="980.2" x2="984.20" y2="983.2" stroke="#666" stroke-width="1"/>
<line x1="1106.65" y1="980.2" x2="1106.65" y2="983.2" stroke="#666" stroke-width="1"/>
<line x1="1229.10" y1="980.2" x2="1229.10" y2="983.2" stroke="#666" stroke-width="1"/>
<line x1="1351.55" y1="980.2" x2="1351.55" y2="983.2" stroke="#666" stroke-width="1"/>
<clipPath id="c2"><rect x="453.5" y="615.3" width="904.8" height="364.9000000000001"/></clipPath>
<rect x="1398" y="127" width="522" height="893" fill="#ececec"/>
<rect x="1402" y="155.2" width="518" height="385.6" rx="15" fill="#fff"/>
<path d="M1402,592.7 A15,15 0 0 1 1417,577.7 H1905 A15,15 0 0 1 1920,592.7 V961.2 H1914 C1911,961.2 1909,964 1905,964 H1415.2 C1412,964 1410,961 1408,961 H1402 Z" fill="#fff"/>
<path d="M1564.85,154.65 H1576.35 L1570.6,161.95000000000002 Z" fill="#222"/>
<g transform="translate(1839.5,146.3) scale(0.68)"><rect x="21.5" y="0" width="3.7" height="12.8" fill="#ff6f32"/><rect x="17.1" y="4.2" width="12.7" height="3.9" fill="#ff6f32"/><path d="M-0.1,14.6 L12.9,8.1 C14.5,12.5 18,15.8 26.5,16.4 L15,21.6 Z" fill="#f8bfa3"/><path d="M-0.1,21.4 L3.8,19.3 L15,25.3 L25.8,19.3 L29.8,21.4 L15,30 Z" fill="#ff6f32"/></g>
<path d="M1885.67,149.69 A8.25,8.25 0 1 1 1884.37,162.08" fill="none" stroke="#fcc0a3" stroke-width="2.7"/>
<path d="M1880.20,147.90 L1880.20,154.80 L1887.10,154.80 Z" fill="#ff6f32"/>
<rect x="1910" y="186.8" width="10" height="100.1" fill="#9b9b9b"/>
<rect x="1910" y="286.9" width="10" height="249.7" fill="#d2d5dd"/>
<rect x="1417" y="227.0" width="2" height="14" fill="rgb(218,215,212)"/><rect x="1419" y="227.0" width="2" height="14" fill="rgb(219,213,209)"/><rect x="1421" y="227.0" width="2" height="14" fill="rgb(221,213,209)"/><rect x="1423" y="227.0" width="2" height="14" fill="rgb(220,209,204)"/><rect x="1425" y="227.0" width="2" height="14" fill="rgb(224,212,206)"/><rect x="1427" y="227.0" width="2" height="14" fill="rgb(221,206,199)"/><rect x="1429" y="227.0" width="2" height="14" fill="rgb(226,211,204)"/><rect x="1431" y="227.0" width="2" height="14" fill="rgb(222,203,194)"/><rect x="1433" y="227.0" width="2" height="14" fill="rgb(228,210,202)"/><rect x="1435" y="227.0" width="2" height="14" fill="rgb(223,200,189)"/><rect x="1437" y="227.0" width="2" height="14" fill="rgb(230,210,201)"/><rect x="1439" y="227.0" width="2" height="14" fill="rgb(224,197,184)"/><rect x="1441" y="227.0" width="2" height="14" fill="rgb(232,210,200)"/><rect x="1443" y="227.0" width="2" height="14" fill="rgb(225,194,180)"/><rect x="1445" y="227.0" width="2" height="14" fill="rgb(234,210,199)"/><rect x="1447" y="227.0" width="2" height="14" fill="rgb(226,191,176)"/><rect x="1449" y="227.0" width="2" height="14" fill="rgb(235,210,198)"/><rect x="1451" y="227.0" width="2" height="14" fill="rgb(227,188,171)"/><rect x="1453" y="227.0" width="2" height="14" fill="rgb(237,210,198)"/><rect x="1455" y="227.0" width="2" height="14" fill="rgb(228,186,167)"/><rect x="1457" y="227.0" width="2" height="14" fill="rgb(238,211,198)"/><rect x="1459" y="227.0" width="2" height="14" fill="rgb(229,183,163)"/><rect x="1461" y="227.0" width="2" height="14" fill="rgb(240,211,199)"/><rect x="1463" y="227.0" width="2" height="14" fill="rgb(230,180,158)"/><rect x="1465" y="227.0" width="2" height="14" fill="rgb(241,211,197)"/><rect x="1467" y="227.0" width="2" height="14" fill="rgb(231,177,154)"/><rect x="1469" y="227.0" width="2" height="14" fill="rgb(241,209,195)"/><rect x="1471" y="227.0" width="2" height="14" fill="rgb(232,175,150)"/><rect x="1473" y="227.0" width="2" height="14" fill="rgb(242,207,193)"/><rect x="1475" y="227.0" width="2" height="14" fill="rgb(233,172,146)"/><rect x="1477" y="227.0" width="2" height="14" fill="rgb(242,206,190)"/><rect x="1479" y="227.0" width="2" height="14" fill="rgb(234,169,142)"/><rect x="1481" y="227.0" width="2" height="14" fill="rgb(243,204,188)"/><rect x="1483" y="227.0" width="2" height="14" fill="rgb(235,167,138)"/><rect x="1485" y="227.0" width="2" height="14" fill="rgb(243,203,185)"/><rect x="1487" y="227.0" width="2" height="14" fill="rgb(236,164,133)"/><rect x="1489" y="227.0" width="2" height="14" fill="rgb(244,201,183)"/><rect x="1491" y="227.0" width="2" height="14" fill="rgb(236,162,129)"/><rect x="1493" y="227.0" width="2" height="14" fill="rgb(244,200,181)"/><rect x="1495" y="227.0" width="2" height="14" fill="rgb(237,159,125)"/><rect x="1497" y="227.0" width="2" height="14" fill="rgb(245,198,178)"/><rect x="1499" y="227.0" width="2" height="14" fill="rgb(238,157,121)"/><rect x="1501" y="227.0" width="2" height="14" fill="rgb(245,197,176)"/><rect x="1503" y="227.0" width="2" height="14" fill="rgb(239,154,117)"/><rect x="1505" y="227.0" width="2" height="14" fill="rgb(246,195,174)"/><rect x="1507" y="227.0" width="2" height="14" fill="rgb(240,151,113)"/><rect x="1509" y="227.0" width="2" height="14" fill="rgb(246,194,172)"/><rect x="1511" y="227.0" width="2" height="14" fill="rgb(241,149,109)"/><rect x="1513" y="227.0" width="2" height="14" fill="rgb(247,193,169)"/><rect x="1515" y="227.0" width="2" height="14" fill="rgb(242,146,106)"/><rect x="1517" y="227.0" width="2" height="14" fill="rgb(247,191,167)"/><rect x="1519" y="227.0" width="2" height="14" fill="rgb(243,144,102)"/><rect x="1521" y="227.0" width="2" height="14" fill="rgb(248,190,165)"/><rect x="1523" y="227.0" width="2" height="14" fill="rgb(244,141,98)"/><rect x="1525" y="227.0" width="2" height="14" fill="rgb(248,188,162)"/><rect x="1527" y="227.0" width="2" height="14" fill="rgb(245,139,94)"/><rect x="1529" y="227.0" width="2" height="14" fill="rgb(249,187,160)"/><rect x="1531" y="227.0" width="2" height="14" fill="rgb(245,136,90)"/><rect x="1533" y="227.0" width="2" height="14" fill="rgb(249,185,158)"/><rect x="1535" y="227.0" width="2" height="14" fill="rgb(246,134,86)"/><rect x="1537" y="227.0" width="2" height="14" fill="rgb(250,184,156)"/><rect x="1539" y="227.0" width="2" height="14" fill="rgb(247,131,82)"/><rect x="1541" y="227.0" width="2" height="14" fill="rgb(250,182,153)"/><rect x="1543" y="227.0" width="2" height="14" fill="rgb(248,129,78)"/><rect x="1545" y="227.0" width="2" height="14" fill="rgb(251,181,151)"/><rect x="1547" y="227.0" width="2" height="14" fill="rgb(249,127,75)"/><rect x="1549" y="227.0" width="2" height="14" fill="rgb(251,180,149)"/><rect x="1551" y="227.0" width="2" height="14" fill="rgb(250,124,71)"/><rect x="1553" y="227.0" width="2" height="14" fill="rgb(252,178,147)"/><rect x="1555" y="227.0" width="2" height="14" fill="rgb(251,122,67)"/><rect x="1557" y="227.0" width="2" height="14" fill="rgb(252,177,145)"/><rect x="1559" y="227.0" width="2" height="14" fill="rgb(251,119,63)"/><rect x="1561" y="227.0" width="2" height="14" fill="rgb(253,175,142)"/><rect x="1563" y="227.0" width="2" height="14" fill="rgb(252,117,59)"/><rect x="1565" y="227.0" width="2" height="14" fill="rgb(253,174,140)"/><rect x="1567" y="227.0" width="2" height="14" fill="rgb(253,114,56)"/><rect x="1569" y="227.0" width="2" height="14" fill="rgb(254,173,138)"/><rect x="1571" y="227.0" width="2" height="14" fill="rgb(254,112,52)"/><rect x="1573" y="227.0" width="2" height="14" fill="rgb(254,171,136)"/><rect x="1575" y="227.0" width="2" height="14" fill="rgb(254,111,51)"/><rect x="1577" y="227.0" width="2" height="14" fill="rgb(254,172,138)"/><rect x="1579" y="227.0" width="2" height="14" fill="rgb(253,114,55)"/><rect x="1581" y="227.0" width="2" height="14" fill="rgb(254,174,140)"/><rect x="1583" y="227.0" width="2" height="14" fill="rgb(252,116,58)"/><rect x="1585" y="227.0" width="2" height="14" fill="rgb(253,175,142)"/><rect x="1587" y="227.0" width="2" height="14" fill="rgb(252,119,62)"/><rect x="1589" y="227.0" width="2" height="14" fill="rgb(253,176,144)"/><rect x="1591" y="227.0" width="2" height="14" fill="rgb(251,121,66)"/><rect x="1593" y="227.0" width="2" height="14" fill="rgb(252,178,146)"/><rect x="1595" y="227.0" width="2" height="14" fill="rgb(250,123,70)"/><rect x="1597" y="227.0" width="2" height="14" fill="rgb(252,179,148)"/><rect x="1599" y="227.0" width="2" height="14" fill="rgb(249,126,74)"/><rect x="1601" y="227.0" width="2" height="14" fill="rgb(251,181,151)"/><rect x="1603" y="227.0" width="2" height="14" fill="rgb(248,128,77)"/><rect x="1605" y="227.0" width="2" height="14" fill="rgb(251,182,153)"/><rect x="1607" y="227.0" width="2" height="14" fill="rgb(247,131,81)"/><rect x="1609" y="227.0" width="2" height="14" fill="rgb(250,183,155)"/><rect x="1611" y="227.0" width="2" height="14" fill="rgb(246,133,85)"/><rect x="1613" y="227.0" width="2" height="14" fill="rgb(250,185,157)"/><rect x="1615" y="227.0" width="2" height="14" fill="rgb(246,136,89)"/><rect x="1617" y="227.0" width="2" height="14" fill="rgb(249,186,160)"/><rect x="1619" y="227.0" width="2" height="14" fill="rgb(245,138,93)"/><rect x="1621" y="227.0" width="2" height="14" fill="rgb(249,188,162)"/><rect x="1623" y="227.0" width="2" height="14" fill="rgb(244,141,97)"/><rect x="1625" y="227.0" width="2" height="14" fill="rgb(248,189,164)"/><rect x="1627" y="227.0" width="2" height="14" fill="rgb(243,143,101)"/><rect x="1629" y="227.0" width="2" height="14" fill="rgb(248,191,166)"/><rect x="1631" y="227.0" width="2" height="14" fill="rgb(242,146,105)"/><rect x="1633" y="227.0" width="2" height="14" fill="rgb(247,192,169)"/><rect x="1635" y="227.0" width="2" height="14" fill="rgb(241,148,108)"/><rect x="1637" y="227.0" width="2" height="14" fill="rgb(247,194,171)"/><rect x="1639" y="227.0" width="2" height="14" fill="rgb(240,151,112)"/><rect x="1641" y="227.0" width="2" height="14" fill="rgb(246,195,173)"/><rect x="1643" y="227.0" width="2" height="14" fill="rgb(239,153,116)"/><rect x="1645" y="227.0" width="2" height="14" fill="rgb(245,197,176)"/><rect x="1647" y="227.0" width="2" height="14" fill="rgb(239,156,120)"/><rect x="1649" y="227.0" width="2" height="14" fill="rgb(245,198,178)"/><rect x="1651" y="227.0" width="2" height="14" fill="rgb(238,158,124)"/><rect x="1653" y="227.0" width="2" height="14" fill="rgb(244,200,180)"/><rect x="1655" y="227.0" width="2" height="14" fill="rgb(237,161,128)"/><rect x="1657" y="227.0" width="2" height="14" fill="rgb(244,201,183)"/><rect x="1659" y="227.0" width="2" height="14" fill="rgb(236,164,132)"/><rect x="1661" y="227.0" width="2" height="14" fill="rgb(243,203,185)"/><rect x="1663" y="227.0" width="2" height="14" fill="rgb(235,166,136)"/><rect x="1665" y="227.0" width="2" height="14" fill="rgb(243,204,187)"/><rect x="1667" y="227.0" width="2" height="14" fill="rgb(234,169,141)"/><rect x="1669" y="227.0" width="2" height="14" fill="rgb(242,206,190)"/><rect x="1671" y="227.0" width="2" height="14" fill="rgb(233,171,145)"/><rect x="1673" y="227.0" width="2" height="14" fill="rgb(242,207,192)"/><rect x="1675" y="227.0" width="2" height="14" fill="rgb(232,174,149)"/><rect x="1677" y="227.0" width="2" height="14" fill="rgb(241,209,194)"/><rect x="1679" y="227.0" width="2" height="14" fill="rgb(231,177,153)"/><rect x="1681" y="227.0" width="2" height="14" fill="rgb(241,210,197)"/><rect x="1683" y="227.0" width="2" height="14" fill="rgb(230,179,157)"/><rect x="1685" y="227.0" width="2" height="14" fill="rgb(240,211,199)"/><rect x="1687" y="227.0" width="2" height="14" fill="rgb(229,182,161)"/><rect x="1689" y="227.0" width="2" height="14" fill="rgb(239,211,198)"/><rect x="1691" y="227.0" width="2" height="14" fill="rgb(228,185,166)"/><rect x="1693" y="227.0" width="2" height="14" fill="rgb(237,210,198)"/><rect x="1695" y="227.0" width="2" height="14" fill="rgb(227,188,170)"/><rect x="1697" y="227.0" width="2" height="14" fill="rgb(236,210,198)"/><rect x="1699" y="227.0" width="2" height="14" fill="rgb(226,190,174)"/><rect x="1701" y="227.0" width="2" height="14" fill="rgb(234,210,199)"/><rect x="1703" y="227.0" width="2" height="14" fill="rgb(225,193,179)"/><rect x="1705" y="227.0" width="2" height="14" fill="rgb(232,210,199)"/><rect x="1707" y="227.0" width="2" height="14" fill="rgb(224,196,183)"/><rect x="1709" y="227.0" width="2" height="14" fill="rgb(230,210,200)"/><rect x="1711" y="227.0" width="2" height="14" fill="rgb(223,199,188)"/><rect x="1713" y="227.0" width="2" height="14" fill="rgb(228,210,202)"/><rect x="1715" y="227.0" width="2" height="14" fill="rgb(222,202,193)"/><rect x="1717" y="227.0" width="2" height="14" fill="rgb(226,211,203)"/><rect x="1719" y="227.0" width="2" height="14" fill="rgb(221,205,197)"/><rect x="1721" y="227.0" width="2" height="14" fill="rgb(224,212,206)"/><rect x="1723" y="227.0" width="2" height="14" fill="rgb(220,208,202)"/><rect x="1725" y="227.0" width="2" height="14" fill="rgb(222,213,208)"/><rect x="1727" y="227.0" width="2" height="14" fill="rgb(219,212,207)"/><rect x="1729" y="227.0" width="2" height="14" fill="rgb(219,214,211)"/><rect x="1731" y="227.0" width="2" height="14" fill="rgb(218,216,214)"/>
<rect x="1565.3" y="227.0" width="1.8" height="14" fill="#ffd9c8"/>
<rect x="1567.2" y="227.0" width="14.6" height="14" fill="#ff6f32"/>
<rect x="1581.8" y="227.0" width="1.6" height="14" fill="#ffd9c8"/>
<rect x="1752" y="252.6" width="132" height="1" fill="#d5d5d5"/>
<path d="M1890.6,226.2 L1896.65,219.8 L1902.7,226.2 Z" fill="#999"/>
<path d="M1890.6,239.8 L1896.65,246.6 L1902.7,239.8 Z" fill="#999"/>
<rect x="1417" y="314.03" width="2" height="14" fill="rgb(218,215,212)"/><rect x="1419" y="314.03" width="2" height="14" fill="rgb(219,213,209)"/><rect x="1421" y="314.03" width="2" height="14" fill="rgb(221,213,209)"/><rect x="1423" y="314.03" width="2" height="14" fill="rgb(220,209,204)"/><rect x="1425" y="314.03" width="2" height="14" fill="rgb(224,212,206)"/><rect x="1427" y="314.03" width="2" height="14" fill="rgb(221,206,199)"/><rect x="1429" y="314.03" width="2" height="14" fill="rgb(226,211,204)"/><rect x="1431" y="314.03" width="2" height="14" fill="rgb(222,203,194)"/><rect x="1433" y="314.03" width="2" height="14" fill="rgb(228,210,202)"/><rect x="1435" y="314.03" width="2" height="14" fill="rgb(223,200,189)"/><rect x="1437" y="314.03" width="2" height="14" fill="rgb(230,210,201)"/><rect x="1439" y="314.03" width="2" height="14" fill="rgb(224,197,184)"/><rect x="1441" y="314.03" width="2" height="14" fill="rgb(232,210,200)"/><rect x="1443" y="314.03" width="2" height="14" fill="rgb(225,194,180)"/><rect x="1445" y="314.03" width="2" height="14" fill="rgb(234,210,199)"/><rect x="1447" y="314.03" width="2" height="14" fill="rgb(226,191,176)"/><rect x="1449" y="314.03" width="2" height="14" fill="rgb(235,210,198)"/><rect x="1451" y="314.03" width="2" height="14" fill="rgb(227,188,171)"/><rect x="1453" y="314.03" width="2" height="14" fill="rgb(237,210,198)"/><rect x="1455" y="314.03" width="2" height="14" fill="rgb(228,186,167)"/><rect x="1457" y="314.03" width="2" height="14" fill="rgb(238,211,198)"/><rect x="1459" y="314.03" width="2" height="14" fill="rgb(229,183,163)"/><rect x="1461" y="314.03" width="2" height="14" fill="rgb(240,211,199)"/><rect x="1463" y="314.03" width="2" height="14" fill="rgb(230,180,158)"/><rect x="1465" y="314.03" width="2" height="14" fill="rgb(241,211,197)"/><rect x="1467" y="314.03" width="2" height="14" fill="rgb(231,177,154)"/><rect x="1469" y="314.03" width="2" height="14" fill="rgb(241,209,195)"/><rect x="1471" y="314.03" width="2" height="14" fill="rgb(232,175,150)"/><rect x="1473" y="314.03" width="2" height="14" fill="rgb(242,207,193)"/><rect x="1475" y="314.03" width="2" height="14" fill="rgb(233,172,146)"/><rect x="1477" y="314.03" width="2" height="14" fill="rgb(242,206,190)"/><rect x="1479" y="314.03" width="2" height="14" fill="rgb(234,169,142)"/><rect x="1481" y="314.03" width="2" height="14" fill="rgb(243,204,188)"/><rect x="1483" y="314.03" width="2" height="14" fill="rgb(235,167,138)"/><rect x="1485" y="314.03" width="2" height="14" fill="rgb(243,203,185)"/><rect x="1487" y="314.03" width="2" height="14" fill="rgb(236,164,133)"/><rect x="1489" y="314.03" width="2" height="14" fill="rgb(244,201,183)"/><rect x="1491" y="314.03" width="2" height="14" fill="rgb(236,162,129)"/><rect x="1493" y="314.03" width="2" height="14" fill="rgb(244,200,181)"/><rect x="1495" y="314.03" width="2" height="14" fill="rgb(237,159,125)"/><rect x="1497" y="314.03" width="2" height="14" fill="rgb(245,198,178)"/><rect x="1499" y="314.03" width="2" height="14" fill="rgb(238,157,121)"/><rect x="1501" y="314.03" width="2" height="14" fill="rgb(245,197,176)"/><rect x="1503" y="314.03" width="2" height="14" fill="rgb(239,154,117)"/><rect x="1505" y="314.03" width="2" height="14" fill="rgb(246,195,174)"/><rect x="1507" y="314.03" width="2" height="14" fill="rgb(240,151,113)"/><rect x="1509" y="314.03" width="2" height="14" fill="rgb(246,194,172)"/><rect x="1511" y="314.03" width="2" height="14" fill="rgb(241,149,109)"/><rect x="1513" y="314.03" width="2" height="14" fill="rgb(247,193,169)"/><rect x="1515" y="314.03" width="2" height="14" fill="rgb(242,146,106)"/><rect x="1517" y="314.03" width="2" height="14" fill="rgb(247,191,167)"/><rect x="1519" y="314.03" width="2" height="14" fill="rgb(243,144,102)"/><rect x="1521" y="314.03" width="2" height="14" fill="rgb(248,190,165)"/><rect x="1523" y="314.03" width="2" height="14" fill="rgb(244,141,98)"/><rect x="1525" y="314.03" width="2" height="14" fill="rgb(248,188,162)"/><rect x="1527" y="314.03" width="2" height="14" fill="rgb(245,139,94)"/><rect x="1529" y="314.03" width="2" height="14" fill="rgb(249,187,160)"/><rect x="1531" y="314.03" width="2" height="14" fill="rgb(245,136,90)"/><rect x="1533" y="314.03" width="2" height="14" fill="rgb(249,185,158)"/><rect x="1535" y="314.03" width="2" height="14" fill="rgb(246,134,86)"/><rect x="1537" y="314.03" width="2" height="14" fill="rgb(250,184,156)"/><rect x="1539" y="314.03" width="2" height="14" fill="rgb(247,131,82)"/><rect x="1541" y="314.03" width="2" height="14" fill="rgb(250,182,153)"/><rect x="1543" y="314.03" width="2" height="14" fill="rgb(248,129,78)"/><rect x="1545" y="314.03" width="2" height="14" fill="rgb(251,181,151)"/><rect x="1547" y="314.03" width="2" height="14" fill="rgb(249,127,75)"/><rect x="1549" y="314.03" width="2" height="14" fill="rgb(251,180,149)"/><rect x="1551" y="314.03" width="2" height="14" fill="rgb(250,124,71)"/><rect x="1553" y="314.03" width="2" height="14" fill="rgb(252,178,147)"/><rect x="1555" y="314.03" width="2" height="14" fill="rgb(251,122,67)"/><rect x="1557" y="314.03" width="2" height="14" fill="rgb(252,177,145)"/><rect x="1559" y="314.03" width="2" height="14" fill="rgb(251,119,63)"/><rect x="1561" y="314.03" width="2" height="14" fill="rgb(253,175,142)"/><rect x="1563" y="314.03" width="2" height="14" fill="rgb(252,117,59)"/><rect x="1565" y="314.03" width="2" height="14" fill="rgb(253,174,140)"/><rect x="1567" y="314.03" width="2" height="14" fill="rgb(253,114,56)"/><rect x="1569" y="314.03" width="2" height="14" fill="rgb(254,173,138)"/><rect x="1571" y="314.03" width="2" height="14" fill="rgb(254,112,52)"/><rect x="1573" y="314.03" width="2" height="14" fill="rgb(254,171,136)"/><rect x="1575" y="314.03" width="2" height="14" fill="rgb(254,111,51)"/><rect x="1577" y="314.03" width="2" height="14" fill="rgb(254,172,138)"/><rect x="1579" y="314.03" width="2" height="14" fill="rgb(253,114,55)"/><rect x="1581" y="314.03" width="2" height="14" fill="rgb(254,174,140)"/><rect x="1583" y="314.03" width="2" height="14" fill="rgb(252,116,58)"/><rect x="1585" y="314.03" width="2" height="14" fill="rgb(253,175,142)"/><rect x="1587" y="314.03" width="2" height="14" fill="rgb(252,119,62)"/><rect x="1589" y="314.03" width="2" height="14" fill="rgb(253,176,144)"/><rect x="1591" y="314.03" width="2" height="14" fill="rgb(251,121,66)"/><rect x="1593" y="314.03" width="2" height="14" fill="rgb(252,178,146)"/><rect x="1595" y="314.03" width="2" height="14" fill="rgb(250,123,70)"/><rect x="1597" y="314.03" width="2" height="14" fill="rgb(252,179,148)"/><rect x="1599" y="314.03" width="2" height="14" fill="rgb(249,126,74)"/><rect x="1601" y="314.03" width="2" height="14" fill="rgb(251,181,151)"/><rect x="1603" y="314.03" width="2" height="14" fill="rgb(248,128,77)"/><rect x="1605" y="314.03" width="2" height="14" fill="rgb(251,182,153)"/><rect x="1607" y="314.03" width="2" height="14" fill="rgb(247,131,81)"/><rect x="1609" y="314.03" width="2" height="14" fill="rgb(250,183,155)"/><rect x="1611" y="314.03" width="2" height="14" fill="rgb(246,133,85)"/><rect x="1613" y="314.03" width="2" height="14" fill="rgb(250,185,157)"/><rect x="1615" y="314.03" width="2" height="14" fill="rgb(246,136,89)"/><rect x="1617" y="314.03" width="2" height="14" fill="rgb(249,186,160)"/><rect x="1619" y="314.03" width="2" height="14" fill="rgb(245,138,93)"/><rect x="1621" y="314.03" width="2" height="14" fill="rgb(249,188,162)"/><rect x="1623" y="314.03" width="2" height="14" fill="rgb(244,141,97)"/><rect x="1625" y="314.03" width="2" height="14" fill="rgb(248,189,164)"/><rect x="1627" y="314.03" width="2" height="14" fill="rgb(243,143,101)"/><rect x="1629" y="314.03" width="2" height="14" fill="rgb(248,191,166)"/><rect x="1631" y="314.03" width="2" height="14" fill="rgb(242,146,105)"/><rect x="1633" y="314.03" width="2" height="14" fill="rgb(247,192,169)"/><rect x="1635" y="314.03" width="2" height="14" fill="rgb(241,148,108)"/><rect x="1637" y="314.03" width="2" height="14" fill="rgb(247,194,171)"/><rect x="1639" y="314.03" width="2" height="14" fill="rgb(240,151,112)"/><rect x="1641" y="314.03" width="2" height="14" fill="rgb(246,195,173)"/><rect x="1643" y="314.03" width="2" height="14" fill="rgb(239,153,116)"/><rect x="1645" y="314.03" width="2" height="14" fill="rgb(245,197,176)"/><rect x="1647" y="314.03" width="2" height="14" fill="rgb(239,156,120)"/><rect x="1649" y="314.03" width="2" height="14" fill="rgb(245,198,178)"/><rect x="1651" y="314.03" width="2" height="14" fill="rgb(238,158,124)"/><rect x="1653" y="314.03" width="2" height="14" fill="rgb(244,200,180)"/><rect x="1655" y="314.03" width="2" height="14" fill="rgb(237,161,128)"/><rect x="1657" y="314.03" width="2" height="14" fill="rgb(244,201,183)"/><rect x="1659" y="314.03" width="2" height="14" fill="rgb(236,164,132)"/><rect x="1661" y="314.03" width="2" height="14" fill="rgb(243,203,185)"/><rect x="1663" y="314.03" width="2" height="14" fill="rgb(235,166,136)"/><rect x="1665" y="314.03" width="2" height="14" fill="rgb(243,204,187)"/><rect x="1667" y="314.03" width="2" height="14" fill="rgb(234,169,141)"/><rect x="1669" y="314.03" width="2" height="14" fill="rgb(242,206,190)"/><rect x="1671" y="314.03" width="2" height="14" fill="rgb(233,171,145)"/><rect x="1673" y="314.03" width="2" height="14" fill="rgb(242,207,192)"/><rect x="1675" y="314.03" width="2" height="14" fill="rgb(232,174,149)"/><rect x="1677" y="314.03" width="2" height="14" fill="rgb(241,209,194)"/><rect x="1679" y="314.03" width="2" height="14" fill="rgb(231,177,153)"/><rect x="1681" y="314.03" width="2" height="14" fill="rgb(241,210,197)"/><rect x="1683" y="314.03" width="2" height="14" fill="rgb(230,179,157)"/><rect x="1685" y="314.03" width="2" height="14" fill="rgb(240,211,199)"/><rect x="1687" y="314.03" width="2" height="14" fill="rgb(229,182,161)"/><rect x="1689" y="314.03" width="2" height="14" fill="rgb(239,211,198)"/><rect x="1691" y="314.03" width="2" height="14" fill="rgb(228,185,166)"/><rect x="1693" y="314.03" width="2" height="14" fill="rgb(237,210,198)"/><rect x="1695" y="314.03" width="2" height="14" fill="rgb(227,188,170)"/><rect x="1697" y="314.03" width="2" height="14" fill="rgb(236,210,198)"/><rect x="1699" y="314.03" width="2" height="14" fill="rgb(226,190,174)"/><rect x="1701" y="314.03" width="2" height="14" fill="rgb(234,210,199)"/><rect x="1703" y="314.03" width="2" height="14" fill="rgb(225,193,179)"/><rect x="1705" y="314.03" width="2" height="14" fill="rgb(232,210,199)"/><rect x="1707" y="314.03" width="2" height="14" fill="rgb(224,196,183)"/><rect x="1709" y="314.03" width="2" height="14" fill="rgb(230,210,200)"/><rect x="1711" y="314.03" width="2" height="14" fill="rgb(223,199,188)"/><rect x="1713" y="314.03" width="2" height="14" fill="rgb(228,210,202)"/><rect x="1715" y="314.03" width="2" height="14" fill="rgb(222,202,193)"/><rect x="1717" y="314.03" width="2" height="14" fill="rgb(226,211,203)"/><rect x="1719" y="314.03" width="2" height="14" fill="rgb(221,205,197)"/><rect x="1721" y="314.03" width="2" height="14" fill="rgb(224,212,206)"/><rect x="1723" y="314.03" width="2" height="14" fill="rgb(220,208,202)"/><rect x="1725" y="314.03" width="2" height="14" fill="rgb(222,213,208)"/><rect x="1727" y="314.03" width="2" height="14" fill="rgb(219,212,207)"/><rect x="1729" y="314.03" width="2" height="14" fill="rgb(219,214,211)"/><rect x="1731" y="314.03" width="2" height="14" fill="rgb(218,216,214)"/>
<rect x="1565.3" y="314.03" width="1.8" height="14" fill="#ffd9c8"/>
<rect x="1567.2" y="314.03" width="14.6" height="14" fill="#ff6f32"/>
<rect x="1581.8" y="314.03" width="1.6" height="14" fill="#ffd9c8"/>
<rect x="1752" y="339.6" width="132" height="1" fill="#d5d5d5"/>
<path d="M1890.6,313.2 L1896.65,306.8 L1902.7,313.2 Z" fill="#999"/>
<path d="M1890.6,326.8 L1896.65,333.6 L1902.7,326.8 Z" fill="#999"/>
<rect x="1417" y="401.06" width="2" height="14" fill="rgb(218,215,212)"/><rect x="1419" y="401.06" width="2" height="14" fill="rgb(219,213,209)"/><rect x="1421" y="401.06" width="2" height="14" fill="rgb(221,213,209)"/><rect x="1423" y="401.06" width="2" height="14" fill="rgb(220,209,204)"/><rect x="1425" y="401.06" width="2" height="14" fill="rgb(224,212,206)"/><rect x="1427" y="401.06" width="2" height="14" fill="rgb(221,206,199)"/><rect x="1429" y="401.06" width="2" height="14" fill="rgb(226,211,204)"/><rect x="1431" y="401.06" width="2" height="14" fill="rgb(222,203,194)"/><rect x="1433" y="401.06" width="2" height="14" fill="rgb(228,210,202)"/><rect x="1435" y="401.06" width="2" height="14" fill="rgb(223,200,189)"/><rect x="1437" y="401.06" width="2" height="14" fill="rgb(230,210,201)"/><rect x="1439" y="401.06" width="2" height="14" fill="rgb(224,197,184)"/><rect x="1441" y="401.06" width="2" height="14" fill="rgb(232,210,200)"/><rect x="1443" y="401.06" width="2" height="14" fill="rgb(225,194,180)"/><rect x="1445" y="401.06" width="2" height="14" fill="rgb(234,210,199)"/><rect x="1447" y="401.06" width="2" height="14" fill="rgb(226,191,176)"/><rect x="1449" y="401.06" width="2" height="14" fill="rgb(235,210,198)"/><rect x="1451" y="401.06" width="2" height="14" fill="rgb(227,188,171)"/><rect x="1453" y="401.06" width="2" height="14" fill="rgb(237,210,198)"/><rect x="1455" y="401.06" width="2" height="14" fill="rgb(228,186,167)"/><rect x="1457" y="401.06" width="2" height="14" fill="rgb(238,211,198)"/><rect x="1459" y="401.06" width="2" height="14" fill="rgb(229,183,163)"/><rect x="1461" y="401.06" width="2" height="14" fill="rgb(240,211,199)"/><rect x="1463" y="401.06" width="2" height="14" fill="rgb(230,180,158)"/><rect x="1465" y="401.06" width="2" height="14" fill="rgb(241,211,197)"/><rect x="1467" y="401.06" width="2" height="14" fill="rgb(231,177,154)"/><rect x="1469" y="401.06" width="2" height="14" fill="rgb(241,209,195)"/><rect x="1471" y="401.06" width="2" height="14" fill="rgb(232,175,150)"/><rect x="1473" y="401.06" width="2" height="14" fill="rgb(242,207,193)"/><rect x="1475" y="401.06" width="2" height="14" fill="rgb(233,172,146)"/><rect x="1477" y="401.06" width="2" height="14" fill="rgb(242,206,190)"/><rect x="1479" y="401.06" width="2" height="14" fill="rgb(234,169,142)"/><rect x="1481" y="401.06" width="2" height="14" fill="rgb(243,204,188)"/><rect x="1483" y="401.06" width="2" height="14" fill="rgb(235,167,138)"/><rect x="1485" y="401.06" width="2" height="14" fill="rgb(243,203,185)"/><rect x="1487" y="401.06" width="2" height="14" fill="rgb(236,164,133)"/><rect x="1489" y="401.06" width="2" height="14" fill="rgb(244,201,183)"/><rect x="1491" y="401.06" width="2" height="14" fill="rgb(236,162,129)"/><rect x="1493" y="401.06" width="2" height="14" fill="rgb(244,200,181)"/><rect x="1495" y="401.06" width="2" height="14" fill="rgb(237,159,125)"/><rect x="1497" y="401.06" width="2" height="14" fill="rgb(245,198,178)"/><rect x="1499" y="401.06" width="2" height="14" fill="rgb(238,157,121)"/><rect x="1501" y="401.06" width="2" height="14" fill="rgb(245,197,176)"/><rect x="1503" y="401.06" width="2" height="14" fill="rgb(239,154,117)"/><rect x="1505" y="401.06" width="2" height="14" fill="rgb(246,195,174)"/><rect x="1507" y="401.06" width="2" height="14" fill="rgb(240,151,113)"/><rect x="1509" y="401.06" width="2" height="14" fill="rgb(246,194,172)"/><rect x="1511" y="401.06" width="2" height="14" fill="rgb(241,149,109)"/><rect x="1513" y="401.06" width="2" height="14" fill="rgb(247,193,169)"/><rect x="1515" y="401.06" width="2" height="14" fill="rgb(242,146,106)"/><rect x="1517" y="401.06" width="2" height="14" fill="rgb(247,191,167)"/><rect x="1519" y="401.06" width="2" height="14" fill="rgb(243,144,102)"/><rect x="1521" y="401.06" width="2" height="14" fill="rgb(248,190,165)"/><rect x="1523" y="401.06" width="2" height="14" fill="rgb(244,141,98)"/><rect x="1525" y="401.06" width="2" height="14" fill="rgb(248,188,162)"/><rect x="1527" y="401.06" width="2" height="14" fill="rgb(245,139,94)"/><rect x="1529" y="401.06" width="2" height="14" fill="rgb(249,187,160)"/><rect x="1531" y="401.06" width="2" height="14" fill="rgb(245,136,90)"/><rect x="1533" y="401.06" width="2" height="14" fill="rgb(249,185,158)"/><rect x="1535" y="401.06" width="2" height="14" fill="rgb(246,134,86)"/><rect x="1537" y="401.06" width="2" height="14" fill="rgb(250,184,156)"/><rect x="1539" y="401.06" width="2" height="14" fill="rgb(247,131,82)"/><rect x="1541" y="401.06" width="2" height="14" fill="rgb(250,182,153)"/><rect x="1543" y="401.06" width="2" height="14" fill="rgb(248,129,78)"/><rect x="1545" y="401.06" width="2" height="14" fill="rgb(251,181,151)"/><rect x="1547" y="401.06" width="2" height="14" fill="rgb(249,127,75)"/><rect x="1549" y="401.06" width="2" height="14" fill="rgb(251,180,149)"/><rect x="1551" y="401.06" width="2" height="14" fill="rgb(250,124,71)"/><rect x="1553" y="401.06" width="2" height="14" fill="rgb(252,178,147)"/><rect x="1555" y="401.06" width="2" height="14" fill="rgb(251,122,67)"/><rect x="1557" y="401.06" width="2" height="14" fill="rgb(252,177,145)"/><rect x="1559" y="401.06" width="2" height="14" fill="rgb(251,119,63)"/><rect x="1561" y="401.06" width="2" height="14" fill="rgb(253,175,142)"/><rect x="1563" y="401.06" width="2" height="14" fill="rgb(252,117,59)"/><rect x="1565" y="401.06" width="2" height="14" fill="rgb(253,174,140)"/><rect x="1567" y="401.06" width="2" height="14" fill="rgb(253,114,56)"/><rect x="1569" y="401.06" width="2" height="14" fill="rgb(254,173,138)"/><rect x="1571" y="401.06" width="2" height="14" fill="rgb(254,112,52)"/><rect x="1573" y="401.06" width="2" height="14" fill="rgb(254,171,136)"/><rect x="1575" y="401.06" width="2" height="14" fill="rgb(254,111,51)"/><rect x="1577" y="401.06" width="2" height="14" fill="rgb(254,172,138)"/><rect x="1579" y="401.06" width="2" height="14" fill="rgb(253,114,55)"/><rect x="1581" y="401.06" width="2" height="14" fill="rgb(254,174,140)"/><rect x="1583" y="401.06" width="2" height="14" fill="rgb(252,116,58)"/><rect x="1585" y="401.06" width="2" height="14" fill="rgb(253,175,142)"/><rect x="1587" y="401.06" width="2" height="14" fill="rgb(252,119,62)"/><rect x="1589" y="401.06" width="2" height="14" fill="rgb(253,176,144)"/><rect x="1591" y="401.06" width="2" height="14" fill="rgb(251,121,66)"/><rect x="1593" y="401.06" width="2" height="14" fill="rgb(252,178,146)"/><rect x="1595" y="401.06" width="2" height="14" fill="rgb(250,123,70)"/><rect x="1597" y="401.06" width="2" height="14" fill="rgb(252,179,148)"/><rect x="1599" y="401.06" width="2" height="14" fill="rgb(249,126,74)"/><rect x="1601" y="401.06" width="2" height="14" fill="rgb(251,181,151)"/><rect x="1603" y="401.06" width="2" height="14" fill="rgb(248,128,77)"/><rect x="1605" y="401.06" width="2" height="14" fill="rgb(251,182,153)"/><rect x="1607" y="401.06" width="2" height="14" fill="rgb(247,131,81)"/><rect x="1609" y="401.06" width="2" height="14" fill="rgb(250,183,155)"/><rect x="1611" y="401.06" width="2" height="14" fill="rgb(246,133,85)"/><rect x="1613" y="401.06" width="2" height="14" fill="rgb(250,185,157)"/><rect x="1615" y="401.06" width="2" height="14" fill="rgb(246,136,89)"/><rect x="1617" y="401.06" width="2" height="14" fill="rgb(249,186,160)"/><rect x="1619" y="401.06" width="2" height="14" fill="rgb(245,138,93)"/><rect x="1621" y="401.06" width="2" height="14" fill="rgb(249,188,162)"/><rect x="1623" y="401.06" width="2" height="14" fill="rgb(244,141,97)"/><rect x="1625" y="401.06" width="2" height="14" fill="rgb(248,189,164)"/><rect x="1627" y="401.06" width="2" height="14" fill="rgb(243,143,101)"/><rect x="1629" y="401.06" width="2" height="14" fill="rgb(248,191,166)"/><rect x="1631" y="401.06" width="2" height="14" fill="rgb(242,146,105)"/><rect x="1633" y="401.06" width="2" height="14" fill="rgb(247,192,169)"/><rect x="1635" y="401.06" width="2" height="14" fill="rgb(241,148,108)"/><rect x="1637" y="401.06" width="2" height="14" fill="rgb(247,194,171)"/><rect x="1639" y="401.06" width="2" height="14" fill="rgb(240,151,112)"/><rect x="1641" y="401.06" width="2" height="14" fill="rgb(246,195,173)"/><rect x="1643" y="401.06" width="2" height="14" fill="rgb(239,153,116)"/><rect x="1645" y="401.06" width="2" height="14" fill="rgb(245,197,176)"/><rect x="1647" y="401.06" width="2" height="14" fill="rgb(239,156,120)"/><rect x="1649" y="401.06" width="2" height="14" fill="rgb(245,198,178)"/><rect x="1651" y="401.06" width="2" height="14" fill="rgb(238,158,124)"/><rect x="1653" y="401.06" width="2" height="14" fill="rgb(244,200,180)"/><rect x="1655" y="401.06" width="2" height="14" fill="rgb(237,161,128)"/><rect x="1657" y="401.06" width="2" height="14" fill="rgb(244,201,183)"/><rect x="1659" y="401.06" width="2" height="14" fill="rgb(236,164,132)"/><rect x="1661" y="401.06" width="2" height="14" fill="rgb(243,203,185)"/><rect x="1663" y="401.06" width="2" height="14" fill="rgb(235,166,136)"/><rect x="1665" y="401.06" width="2" height="14" fill="rgb(243,204,187)"/><rect x="1667" y="401.06" width="2" height="14" fill="rgb(234,169,141)"/><rect x="1669" y="401.06" width="2" height="14" fill="rgb(242,206,190)"/><rect x="1671" y="401.06" width="2" height="14" fill="rgb(233,171,145)"/><rect x="1673" y="401.06" width="2" height="14" fill="rgb(242,207,192)"/><rect x="1675" y="401.06" width="2" height="14" fill="rgb(232,174,149)"/><rect x="1677" y="401.06" width="2" height="14" fill="rgb(241,209,194)"/><rect x="1679" y="401.06" width="2" height="14" fill="rgb(231,177,153)"/><rect x="1681" y="401.06" width="2" height="14" fill="rgb(241,210,197)"/><rect x="1683" y="401.06" width="2" height="14" fill="rgb(230,179,157)"/><rect x="1685" y="401.06" width="2" height="14" fill="rgb(240,211,199)"/><rect x="1687" y="401.06" width="2" height="14" fill="rgb(229,182,161)"/><rect x="1689" y="401.06" width="2" height="14" fill="rgb(239,211,198)"/><rect x="1691" y="401.06" width="2" height="14" fill="rgb(228,185,166)"/><rect x="1693" y="401.06" width="2" height="14" fill="rgb(237,210,198)"/><rect x="1695" y="401.06" width="2" height="14" fill="rgb(227,188,170)"/><rect x="1697" y="401.06" width="2" height="14" fill="rgb(236,210,198)"/><rect x="1699" y="401.06" width="2" height="14" fill="rgb(226,190,174)"/><rect x="1701" y="401.06" width="2" height="14" fill="rgb(234,210,199)"/><rect x="1703" y="401.06" width="2" height="14" fill="rgb(225,193,179)"/><rect x="1705" y="401.06" width="2" height="14" fill="rgb(232,210,199)"/><rect x="1707" y="401.06" width="2" height="14" fill="rgb(224,196,183)"/><rect x="1709" y="401.06" width="2" height="14" fill="rgb(230,210,200)"/><rect x="1711" y="401.06" width="2" height="14" fill="rgb(223,199,188)"/><rect x="1713" y="401.06" width="2" height="14" fill="rgb(228,210,202)"/><rect x="1715" y="401.06" width="2" height="14" fill="rgb(222,202,193)"/><rect x="1717" y="401.06" width="2" height="14" fill="rgb(226,211,203)"/><rect x="1719" y="401.06" width="2" height="14" fill="rgb(221,205,197)"/><rect x="1721" y="401.06" width="2" height="14" fill="rgb(224,212,206)"/><rect x="1723" y="401.06" width="2" height="14" fill="rgb(220,208,202)"/><rect x="1725" y="401.06" width="2" height="14" fill="rgb(222,213,208)"/><rect x="1727" y="401.06" width="2" height="14" fill="rgb(219,212,207)"/><rect x="1729" y="401.06" width="2" height="14" fill="rgb(219,214,211)"/><rect x="1731" y="401.06" width="2" height="14" fill="rgb(218,216,214)"/>
<rect x="1565.3" y="401.06" width="1.8" height="14" fill="#ffd9c8"/>
<rect x="1567.2" y="401.06" width="14.6" height="14" fill="#ff6f32"/>
<rect x="1581.8" y="401.06" width="1.6" height="14" fill="#ffd9c8"/>
<rect x="1752" y="426.7" width="132" height="1" fill="#d5d5d5"/>
<path d="M1890.6,400.3 L1896.65,393.9 L1902.7,400.3 Z" fill="#999"/>
<path d="M1890.6,413.9 L1896.65,420.7 L1902.7,413.9 Z" fill="#999"/>
<rect x="1417" y="488.09000000000003" width="2" height="14" fill="rgb(218,215,212)"/><rect x="1419" y="488.09000000000003" width="2" height="14" fill="rgb(219,213,209)"/><rect x="1421" y="488.09000000000003" width="2" height="14" fill="rgb(221,213,209)"/><rect x="1423" y="488.09000000000003" width="2" height="14" fill="rgb(220,209,204)"/><rect x="1425" y="488.09000000000003" width="2" height="14" fill="rgb(224,212,206)"/><rect x="1427" y="488.09000000000003" width="2" height="14" fill="rgb(221,206,199)"/><rect x="1429" y="488.09000000000003" width="2" height="14" fill="rgb(226,211,204)"/><rect x="1431" y="488.09000000000003" width="2" height="14" fill="rgb(222,203,194)"/><rect x="1433" y="488.09000000000003" width="2" height="14" fill="rgb(228,210,202)"/><rect x="1435" y="488.09000000000003" width="2" height="14" fill="rgb(223,200,189)"/><rect x="1437" y="488.09000000000003" width="2" height="14" fill="rgb(230,210,201)"/><rect x="1439" y="488.09000000000003" width="2" height="14" fill="rgb(224,197,184)"/><rect x="1441" y="488.09000000000003" width="2" height="14" fill="rgb(232,210,200)"/><rect x="1443" y="488.09000000000003" width="2" height="14" fill="rgb(225,194,180)"/><rect x="1445" y="488.09000000000003" width="2" height="14" fill="rgb(234,210,199)"/><rect x="1447" y="488.09000000000003" width="2" height="14" fill="rgb(226,191,176)"/><rect x="1449" y="488.09000000000003" width="2" height="14" fill="rgb(235,210,198)"/><rect x="1451" y="488.09000000000003" width="2" height="14" fill="rgb(227,188,171)"/><rect x="1453" y="488.09000000000003" width="2" height="14" fill="rgb(237,210,198)"/><rect x="1455" y="488.09000000000003" width="2" height="14" fill="rgb(228,186,167)"/><rect x="1457" y="488.09000000000003" width="2" height="14" fill="rgb(238,211,198)"/><rect x="1459" y="488.09000000000003" width="2" height="14" fill="rgb(229,183,163)"/><rect x="1461" y="488.09000000000003" width="2" height="14" fill="rgb(240,211,199)"/><rect x="1463" y="488.09000000000003" width="2" height="14" fill="rgb(230,180,158)"/><rect x="1465" y="488.09000000000003" width="2" height="14" fill="rgb(241,211,197)"/><rect x="1467" y="488.09000000000003" width="2" height="14" fill="rgb(231,177,154)"/><rect x="1469" y="488.09000000000003" width="2" height="14" fill="rgb(241,209,195)"/><rect x="1471" y="488.09000000000003" width="2" height="14" fill="rgb(232,175,150)"/><rect x="1473" y="488.09000000000003" width="2" height="14" fill="rgb(242,207,193)"/><rect x="1475" y="488.09000000000003" width="2" height="14" fill="rgb(233,172,146)"/><rect x="1477" y="488.09000000000003" width="2" height="14" fill="rgb(242,206,190)"/><rect x="1479" y="488.09000000000003" width="2" height="14" fill="rgb(234,169,142)"/><rect x="1481" y="488.09000000000003" width="2" height="14" fill="rgb(243,204,188)"/><rect x="1483" y="488.09000000000003" width="2" height="14" fill="rgb(235,167,138)"/><rect x="1485" y="488.09000000000003" width="2" height="14" fill="rgb(243,203,185)"/><rect x="1487" y="488.09000000000003" width="2" height="14" fill="rgb(236,164,133)"/><rect x="1489" y="488.09000000000003" width="2" height="14" fill="rgb(244,201,183)"/><rect x="1491" y="488.09000000000003" width="2" height="14" fill="rgb(236,162,129)"/><rect x="1493" y="488.09000000000003" width="2" height="14" fill="rgb(244,200,181)"/><rect x="1495" y="488.09000000000003" width="2" height="14" fill="rgb(237,159,125)"/><rect x="1497" y="488.09000000000003" width="2" height="14" fill="rgb(245,198,178)"/><rect x="1499" y="488.09000000000003" width="2" height="14" fill="rgb(238,157,121)"/><rect x="1501" y="488.09000000000003" width="2" height="14" fill="rgb(245,197,176)"/><rect x="1503" y="488.09000000000003" width="2" height="14" fill="rgb(239,154,117)"/><rect x="1505" y="488.09000000000003" width="2" height="14" fill="rgb(246,195,174)"/><rect x="1507" y="488.09000000000003" width="2" height="14" fill="rgb(240,151,113)"/><rect x="1509" y="488.09000000000003" width="2" height="14" fill="rgb(246,194,172)"/><rect x="1511" y="488.09000000000003" width="2" height="14" fill="rgb(241,149,109)"/><rect x="1513" y="488.09000000000003" width="2" height="14" fill="rgb(247,193,169)"/><rect x="1515" y="488.09000000000003" width="2" height="14" fill="rgb(242,146,106)"/><rect x="1517" y="488.09000000000003" width="2" height="14" fill="rgb(247,191,167)"/><rect x="1519" y="488.09000000000003" width="2" height="14" fill="rgb(243,144,102)"/><rect x="1521" y="488.09000000000003" width="2" height="14" fill="rgb(248,190,165)"/><rect x="1523" y="488.09000000000003" width="2" height="14" fill="rgb(244,141,98)"/><rect x="1525" y="488.09000000000003" width="2" height="14" fill="rgb(248,188,162)"/><rect x="1527" y="488.09000000000003" width="2" height="14" fill="rgb(245,139,94)"/><rect x="1529" y="488.09000000000003" width="2" height="14" fill="rgb(249,187,160)"/><rect x="1531" y="488.09000000000003" width="2" height="14" fill="rgb(245,136,90)"/><rect x="1533" y="488.09000000000003" width="2" height="14" fill="rgb(249,185,158)"/><rect x="1535" y="488.09000000000003" width="2" height="14" fill="rgb(246,134,86)"/><rect x="1537" y="488.09000000000003" width="2" height="14" fill="rgb(250,184,156)"/><rect x="1539" y="488.09000000000003" width="2" height="14" fill="rgb(247,131,82)"/><rect x="1541" y="488.09000000000003" width="2" height="14" fill="rgb(250,182,153)"/><rect x="1543" y="488.09000000000003" width="2" height="14" fill="rgb(248,129,78)"/><rect x="1545" y="488.09000000000003" width="2" height="14" fill="rgb(251,181,151)"/><rect x="1547" y="488.09000000000003" width="2" height="14" fill="rgb(249,127,75)"/><rect x="1549" y="488.09000000000003" width="2" height="14" fill="rgb(251,180,149)"/><rect x="1551" y="488.09000000000003" width="2" height="14" fill="rgb(250,124,71)"/><rect x="1553" y="488.09000000000003" width="2" height="14" fill="rgb(252,178,147)"/><rect x="1555" y="488.09000000000003" width="2" height="14" fill="rgb(251,122,67)"/><rect x="1557" y="488.09000000000003" width="2" height="14" fill="rgb(252,177,145)"/><rect x="1559" y="488.09000000000003" width="2" height="14" fill="rgb(251,119,63)"/><rect x="1561" y="488.09000000000003" width="2" height="14" fill="rgb(253,175,142)"/><rect x="1563" y="488.09000000000003" width="2" height="14" fill="rgb(252,117,59)"/><rect x="1565" y="488.09000000000003" width="2" height="14" fill="rgb(253,174,140)"/><rect x="1567" y="488.09000000000003" width="2" height="14" fill="rgb(253,114,56)"/><rect x="1569" y="488.09000000000003" width="2" height="14" fill="rgb(254,173,138)"/><rect x="1571" y="488.09000000000003" width="2" height="14" fill="rgb(254,112,52)"/><rect x="1573" y="488.09000000000003" width="2" height="14" fill="rgb(254,171,136)"/><rect x="1575" y="488.09000000000003" width="2" height="14" fill="rgb(254,111,51)"/><rect x="1577" y="488.09000000000003" width="2" height="14" fill="rgb(254,172,138)"/><rect x="1579" y="488.09000000000003" width="2" height="14" fill="rgb(253,114,55)"/><rect x="1581" y="488.09000000000003" width="2" height="14" fill="rgb(254,174,140)"/><rect x="1583" y="488.09000000000003" width="2" height="14" fill="rgb(252,116,58)"/><rect x="1585" y="488.09000000000003" width="2" height="14" fill="rgb(253,175,142)"/><rect x="1587" y="488.09000000000003" width="2" height="14" fill="rgb(252,119,62)"/><rect x="1589" y="488.09000000000003" width="2" height="14" fill="rgb(253,176,144)"/><rect x="1591" y="488.09000000000003" width="2" height="14" fill="rgb(251,121,66)"/><rect x="1593" y="488.09000000000003" width="2" height="14" fill="rgb(252,178,146)"/><rect x="1595" y="488.09000000000003" width="2" height="14" fill="rgb(250,123,70)"/><rect x="1597" y="488.09000000000003" width="2" height="14" fill="rgb(252,179,148)"/><rect x="1599" y="488.09000000000003" width="2" height="14" fill="rgb(249,126,74)"/><rect x="1601" y="488.09000000000003" width="2" height="14" fill="rgb(251,181,151)"/><rect x="1603" y="488.09000000000003" width="2" height="14" fill="rgb(248,128,77)"/><rect x="1605" y="488.09000000000003" width="2" height="14" fill="rgb(251,182,153)"/><rect x="1607" y="488.09000000000003" width="2" height="14" fill="rgb(247,131,81)"/><rect x="1609" y="488.09000000000003" width="2" height="14" fill="rgb(250,183,155)"/><rect x="1611" y="488.09000000000003" width="2" height="14" fill="rgb(246,133,85)"/><rect x="1613" y="488.09000000000003" width="2" height="14" fill="rgb(250,185,157)"/><rect x="1615" y="488.09000000000003" width="2" height="14" fill="rgb(246,136,89)"/><rect x="1617" y="488.09000000000003" width="2" height="14" fill="rgb(249,186,160)"/><rect x="1619" y="488.09000000000003" width="2" height="14" fill="rgb(245,138,93)"/><rect x="1621" y="488.09000000000003" width="2" height="14" fill="rgb(249,188,162)"/><rect x="1623" y="488.09000000000003" width="2" height="14" fill="rgb(244,141,97)"/><rect x="1625" y="488.09000000000003" width="2" height="14" fill="rgb(248,189,164)"/><rect x="1627" y="488.09000000000003" width="2" height="14" fill="rgb(243,143,101)"/><rect x="1629" y="488.09000000000003" width="2" height="14" fill="rgb(248,191,166)"/><rect x="1631" y="488.09000000000003" width="2" height="14" fill="rgb(242,146,105)"/><rect x="1633" y="488.09000000000003" width="2" height="14" fill="rgb(247,192,169)"/><rect x="1635" y="488.09000000000003" width="2" height="14" fill="rgb(241,148,108)"/><rect x="1637" y="488.09000000000003" width="2" height="14" fill="rgb(247,194,171)"/><rect x="1639" y="488.09000000000003" width="2" height="14" fill="rgb(240,151,112)"/><rect x="1641" y="488.09000000000003" width="2" height="14" fill="rgb(246,195,173)"/><rect x="1643" y="488.09000000000003" width="2" height="14" fill="rgb(239,153,116)"/><rect x="1645" y="488.09000000000003" width="2" height="14" fill="rgb(245,197,176)"/><rect x="1647" y="488.09000000000003" width="2" height="14" fill="rgb(239,156,120)"/><rect x="1649" y="488.09000000000003" width="2" height="14" fill="rgb(245,198,178)"/><rect x="1651" y="488.09000000000003" width="2" height="14" fill="rgb(238,158,124)"/><rect x="1653" y="488.09000000000003" width="2" height="14" fill="rgb(244,200,180)"/><rect x="1655" y="488.09000000000003" width="2" height="14" fill="rgb(237,161,128)"/><rect x="1657" y="488.09000000000003" width="2" height="14" fill="rgb(244,201,183)"/><rect x="1659" y="488.09000000000003" width="2" height="14" fill="rgb(236,164,132)"/><rect x="1661" y="488.09000000000003" width="2" height="14" fill="rgb(243,203,185)"/><rect x="1663" y="488.09000000000003" width="2" height="14" fill="rgb(235,166,136)"/><rect x="1665" y="488.09000000000003" width="2" height="14" fill="rgb(243,204,187)"/><rect x="1667" y="488.09000000000003" width="2" height="14" fill="rgb(234,169,141)"/><rect x="1669" y="488.09000000000003" width="2" height="14" fill="rgb(242,206,190)"/><rect x="1671" y="488.09000000000003" width="2" height="14" fill="rgb(233,171,145)"/><rect x="1673" y="488.09000000000003" width="2" height="14" fill="rgb(242,207,192)"/><rect x="1675" y="488.09000000000003" width="2" height="14" fill="rgb(232,174,149)"/><rect x="1677" y="488.09000000000003" width="2" height="14" fill="rgb(241,209,194)"/><rect x="1679" y="488.09000000000003" width="2" height="14" fill="rgb(231,177,153)"/><rect x="1681" y="488.09000000000003" width="2" height="14" fill="rgb(241,210,197)"/><rect x="1683" y="488.09000000000003" width="2" height="14" fill="rgb(230,179,157)"/><rect x="1685" y="488.09000000000003" width="2" height="14" fill="rgb(240,211,199)"/><rect x="1687" y="488.09000000000003" width="2" height="14" fill="rgb(229,182,161)"/><rect x="1689" y="488.09000000000003" width="2" height="14" fill="rgb(239,211,198)"/><rect x="1691" y="488.09000000000003" width="2" height="14" fill="rgb(228,185,166)"/><rect x="1693" y="488.09000000000003" width="2" height="14" fill="rgb(237,210,198)"/><rect x="1695" y="488.09000000000003" width="2" height="14" fill="rgb(227,188,170)"/><rect x="1697" y="488.09000000000003" width="2" height="14" fill="rgb(236,210,198)"/><rect x="1699" y="488.09000000000003" width="2" height="14" fill="rgb(226,190,174)"/><rect x="1701" y="488.09000000000003" width="2" height="14" fill="rgb(234,210,199)"/><rect x="1703" y="488.09000000000003" width="2" height="14" fill="rgb(225,193,179)"/><rect x="1705" y="488.09000000000003" width="2" height="14" fill="rgb(232,210,199)"/><rect x="1707" y="488.09000000000003" width="2" height="14" fill="rgb(224,196,183)"/><rect x="1709" y="488.09000000000003" width="2" height="14" fill="rgb(230,210,200)"/><rect x="1711" y="488.09000000000003" width="2" height="14" fill="rgb(223,199,188)"/><rect x="1713" y="488.09000000000003" width="2" height="14" fill="rgb(228,210,202)"/><rect x="1715" y="488.09000000000003" width="2" height="14" fill="rgb(222,202,193)"/><rect x="1717" y="488.09000000000003" width="2" height="14" fill="rgb(226,211,203)"/><rect x="1719" y="488.09000000000003" width="2" height="14" fill="rgb(221,205,197)"/><rect x="1721" y="488.09000000000003" width="2" height="14" fill="rgb(224,212,206)"/><rect x="1723" y="488.09000000000003" width="2" height="14" fill="rgb(220,208,202)"/><rect x="1725" y="488.09000000000003" width="2" height="14" fill="rgb(222,213,208)"/><rect x="1727" y="488.09000000000003" width="2" height="14" fill="rgb(219,212,207)"/><rect x="1729" y="488.09000000000003" width="2" height="14" fill="rgb(219,214,211)"/><rect x="1731" y="488.09000000000003" width="2" height="14" fill="rgb(218,216,214)"/>
<rect x="1565.3" y="488.09000000000003" width="1.8" height="14" fill="#ffd9c8"/>
<rect x="1567.2" y="488.09000000000003" width="14.6" height="14" fill="#ff6f32"/>
<rect x="1581.8" y="488.09000000000003" width="1.6" height="14" fill="#ffd9c8"/>
<rect x="1752" y="513.7" width="132" height="1" fill="#d5d5d5"/>
<path d="M1890.6,487.3 L1896.65,480.9 L1902.7,487.3 Z" fill="#999"/>
<path d="M1890.6,500.9 L1896.65,507.7 L1902.7,500.9 Z" fill="#999"/>
<path d="M1552.85,579.0 H1564.35 L1558.6,585.5999999999999 Z" fill="#222"/>
<path d="M1431,627 L1423.2,633.2 L1431,639.4" fill="none" stroke="#999" stroke-width="1.8"/>
<g transform="translate(1773,621.8) scale(0.68)"><rect x="21.5" y="0" width="3.7" height="12.8" fill="#ff6f32"/><rect x="17.1" y="4.2" width="12.7" height="3.9" fill="#ff6f32"/><path d="M-0.1,14.6 L12.9,8.1 C14.5,12.5 18,15.8 26.5,16.4 L15,21.6 Z" fill="#f8bfa3"/><path d="M-0.1,21.4 L3.8,19.3 L15,25.3 L25.8,19.3 L29.8,21.4 L15,30 Z" fill="#ff6f32"/></g>
<path d="M1818.27,624.74 A8.25,8.25 0 1 1 1816.97,637.13" fill="none" stroke="#fcc0a3" stroke-width="2.7"/>
<path d="M1812.80,622.95 L1812.80,629.85 L1819.70,629.85 Z" fill="#ff6f32"/>
<rect x="1402" y="656" width="518" height="51.8" fill="#333333"/>
<rect x="1402" y="707.8" width="518" height="73.5" fill="#f2f2f2"/>
<rect x="1408" y="754" width="65" height="1" fill="#d9d9d9"/>
<path d="M1479.1000000000001,727.2 L1485.2,720.3 L1491.3,727.2 Z" fill="#999"/>
<path d="M1479.1000000000001,740.8 L1485.2,747.7 L1491.3,740.8 Z" fill="#999"/>
<rect x="1511" y="754" width="65" height="1" fill="#d9d9d9"/>
<path d="M1582.5,727.2 L1588.6,720.3 L1594.6999999999998,727.2 Z" fill="#999"/>
<path d="M1582.5,740.8 L1588.6,747.7 L1594.6999999999998,740.8 Z" fill="#999"/>
<rect x="1614" y="754" width="66" height="1" fill="#d9d9d9"/>
<path d="M1686.4,727.2 L1692.5,720.3 L1698.6,727.2 Z" fill="#999"/>
<path d="M1686.4,740.8 L1692.5,747.7 L1698.6,740.8 Z" fill="#999"/>
<rect x="1718" y="754" width="66" height="1" fill="#d9d9d9"/>
<path d="M1790.3000000000002,727.2 L1796.4,720.3 L1802.5,727.2 Z" fill="#999"/>
<path d="M1790.3000000000002,740.8 L1796.4,747.7 L1802.5,740.8 Z" fill="#999"/>
<rect x="1822" y="754" width="66" height="1" fill="#d9d9d9"/>
<path d="M1894.8000000000002,727.2 L1900.9,720.3 L1907.0,727.2 Z" fill="#999"/>
<path d="M1894.8000000000002,740.8 L1900.9,747.7 L1907.0,740.8 Z" fill="#999"/>
<rect x="1402" y="820.5" width="518" height="1" fill="#e3e3e3"/>
<rect x="1402" y="974" width="173" height="46" fill="#9a9a9a"/>
<rect x="1575" y="974" width="345" height="46" fill="#d0d4dc"/>
<text x="31.00" y="23.80" font-size="18" font-weight="400" fill="#000" textLength="380.31" lengthAdjust="spacingAndGlyphs">typical_simu_brentuximal.smlx - Simulx - 2023R1</text>
<text x="20.37" y="61.20" font-size="16" font-weight="400" fill="#d9d9d9" textLength="46.11" lengthAdjust="spacingAndGlyphs">Project</text>
<text x="107.20" y="61.20" font-size="16" font-weight="400" fill="#d9d9d9" textLength="52.80" lengthAdjust="spacingAndGlyphs">Settings</text>
<text x="199.58" y="61.20" font-size="16" font-weight="400" fill="#d9d9d9" textLength="42.71" lengthAdjust="spacingAndGlyphs">Export</text>
<text x="282.32" y="61.20" font-size="16" font-weight="400" fill="#d9d9d9" textLength="32.28" lengthAdjust="spacingAndGlyphs">Help</text>
<text x="1892.20" y="61.00" font-size="10.5" font-weight="700" fill="#e8e8e8" textLength="6.81" lengthAdjust="spacingAndGlyphs">2</text>
<text x="71.52" y="109.70" font-size="18" font-weight="400" fill="#f4f4f4" textLength="73.37" lengthAdjust="spacingAndGlyphs" stroke="#f4f4f4" stroke-width="0.55">Definition</text>
<text x="178.35" y="109.70" font-size="18" font-weight="400" fill="#f4f4f4" textLength="85.20" lengthAdjust="spacingAndGlyphs" stroke="#f4f4f4" stroke-width="0.55">Exploration</text>
<text x="298.30" y="109.70" font-size="18" font-weight="400" fill="#f4f4f4" textLength="79.86" lengthAdjust="spacingAndGlyphs" stroke="#f4f4f4" stroke-width="0.55">Simulation</text>
<text x="412.01" y="109.70" font-size="18" font-weight="400" fill="#f4f4f4" textLength="53.69" lengthAdjust="spacingAndGlyphs" stroke="#f4f4f4" stroke-width="0.55">Results</text>
<text x="499.97" y="109.70" font-size="18" font-weight="400" fill="#f4f4f4" textLength="37.13" lengthAdjust="spacingAndGlyphs" stroke="#f4f4f4" stroke-width="0.55">Plots</text>
<text x="177.20" y="270.90" font-size="14" font-weight="700" fill="#9a9a9a" textLength="74.89" lengthAdjust="spacingAndGlyphs">Parameters</text>
<text x="152.50" y="343.80" font-size="16" font-weight="400" fill="#222" textLength="136.19" lengthAdjust="spacingAndGlyphs">explorationGroup1</text>
<text x="181.20" y="386.90" font-size="14" font-weight="700" fill="#222" textLength="78.99" lengthAdjust="spacingAndGlyphs">135mg_q3w</text>
<text x="151.41" y="501.10" font-size="17" font-weight="400" fill="#222" textLength="185.27" lengthAdjust="spacingAndGlyphs">New exploration group…</text>
<text x="167.90" y="613.60" font-size="14" font-weight="700" fill="#999" textLength="93.70" lengthAdjust="spacingAndGlyphs">regularMMAEc</text>
<text x="174.00" y="654.60" font-size="14" font-weight="700" fill="#999" textLength="80.70" lengthAdjust="spacingAndGlyphs">regularADCc</text>
<text x="197.30" y="769.30" font-size="14" font-weight="700" fill="#999" textLength="34.10" lengthAdjust="spacingAndGlyphs">Cycle</text>
<text x="65.00" y="960.90" font-size="14" font-weight="700" fill="#222" textLength="108.71" lengthAdjust="spacingAndGlyphs">SEND ELEMENTS</text>
<text x="68.00" y="982.90" font-size="14" font-weight="700" fill="#222" textLength="102.50" lengthAdjust="spacingAndGlyphs">TO SIMULATION</text>
<text x="259.00" y="971.90" font-size="14" font-weight="700" fill="#222" textLength="40.41" lengthAdjust="spacingAndGlyphs">APPLY</text>
<text x="491.40" y="579.00" font-size="10" font-weight="400" fill="#666">0</text>
<text x="611.07" y="579.00" font-size="10" font-weight="400" fill="#666">50</text>
<text x="730.74" y="579.00" font-size="10" font-weight="400" fill="#666">100</text>
<text x="853.19" y="579.00" font-size="10" font-weight="400" fill="#666">150</text>
<text x="975.64" y="579.00" font-size="10" font-weight="400" fill="#666">200</text>
<text x="1098.09" y="579.00" font-size="10" font-weight="400" fill="#666">250</text>
<text x="1220.54" y="579.00" font-size="10" font-weight="400" fill="#666">300</text>
<text x="1342.99" y="579.00" font-size="10" font-weight="400" fill="#666">350</text>
<text x="435.24" y="229.45" font-size="10" font-weight="400" fill="#666">10</text>
<text x="440.80" y="399.30" font-size="10" font-weight="400" fill="#666">1</text>
<text x="432.46" y="569.15" font-size="10" font-weight="400" fill="#666">0.1</text>
<text x="890.40" y="187.00" font-size="13" font-weight="400" fill="#222" textLength="29.86" lengthAdjust="spacingAndGlyphs">ADCc</text>
<text x="491.40" y="993.20" font-size="10" font-weight="400" fill="#666">0</text>
<text x="611.07" y="993.20" font-size="10" font-weight="400" fill="#666">50</text>
<text x="730.74" y="993.20" font-size="10" font-weight="400" fill="#666">100</text>
<text x="853.19" y="993.20" font-size="10" font-weight="400" fill="#666">150</text>
<text x="975.64" y="993.20" font-size="10" font-weight="400" fill="#666">200</text>
<text x="1098.09" y="993.20" font-size="10" font-weight="400" fill="#666">250</text>
<text x="1220.54" y="993.20" font-size="10" font-weight="400" fill="#666">300</text>
<text x="1342.99" y="993.20" font-size="10" font-weight="400" fill="#666">350</text>
<text x="440.80" y="629.01" font-size="10" font-weight="400" fill="#666">4</text>
<text x="440.80" y="711.10" font-size="10" font-weight="400" fill="#666">1</text>
<text x="432.46" y="847.45" font-size="10" font-weight="400" fill="#666">0.1</text>
<text x="426.90" y="983.80" font-size="10" font-weight="400" fill="#666">0.01</text>
<text x="884.90" y="601.90" font-size="13" font-weight="400" fill="#222" textLength="40.75" lengthAdjust="spacingAndGlyphs">MMAEc</text>
<text x="1412.30" y="165.00" font-size="29" font-weight="400" fill="#222" textLength="142.17" lengthAdjust="spacingAndGlyphs">Parameters</text>
<text x="1417.50" y="205.90" font-size="16" font-weight="400" fill="#222" textLength="16.92" lengthAdjust="spacingAndGlyphs">CL</text>
<text x="1751.73" y="240.00" font-size="16" font-weight="400" fill="#999" textLength="30.07" lengthAdjust="spacingAndGlyphs">1.56</text>
<text x="1417.50" y="292.93" font-size="16" font-weight="400" fill="#222" textLength="17.11" lengthAdjust="spacingAndGlyphs">V1</text>
<text x="1752.70" y="327.03" font-size="16" font-weight="400" fill="#999" textLength="29.11" lengthAdjust="spacingAndGlyphs">4.29</text>
<text x="1417.50" y="379.96" font-size="16" font-weight="400" fill="#222" textLength="19.11" lengthAdjust="spacingAndGlyphs">Q2</text>
<text x="1752.70" y="414.06" font-size="16" font-weight="400" fill="#999" textLength="29.11" lengthAdjust="spacingAndGlyphs">2.83</text>
<text x="1417.50" y="466.99" font-size="16" font-weight="400" fill="#222" textLength="17.01" lengthAdjust="spacingAndGlyphs">V2</text>
<text x="1752.70" y="501.09" font-size="16" font-weight="400" fill="#999" textLength="29.11" lengthAdjust="spacingAndGlyphs">3.83</text>
<text x="1413.10" y="588.90" font-size="29" font-weight="400" fill="#222" textLength="128.66" lengthAdjust="spacingAndGlyphs">Treatment</text>
<text x="1451.36" y="638.80" font-size="16" font-weight="400" fill="#ff8a5c" textLength="43.55" lengthAdjust="spacingAndGlyphs">From:</text>
<text x="1502.78" y="638.80" font-size="16" font-weight="700" fill="#ff6f32" textLength="92.65" lengthAdjust="spacingAndGlyphs">135mg_q3w</text>
<text x="1415.50" y="697.60" font-size="16" font-weight="700" fill="#ffffff" textLength="76.39" lengthAdjust="spacingAndGlyphs">Start time</text>
<text x="1518.36" y="678.00" font-size="16" font-weight="700" fill="#ffffff" textLength="74.83" lengthAdjust="spacingAndGlyphs">Interdose</text>
<text x="1525.22" y="697.60" font-size="16" font-weight="700" fill="#ffffff" textLength="61.67" lengthAdjust="spacingAndGlyphs">interval</text>
<text x="1624.53" y="697.60" font-size="16" font-weight="700" fill="#ffffff" textLength="69.77" lengthAdjust="spacingAndGlyphs">Nb doses</text>
<text x="1733.30" y="697.60" font-size="16" font-weight="700" fill="#ffffff" textLength="60.82" lengthAdjust="spacingAndGlyphs">Amount</text>
<text x="1834.95" y="697.60" font-size="16" font-weight="700" fill="#ffffff" textLength="65.36" lengthAdjust="spacingAndGlyphs">Infusion</text>
<text x="1408.00" y="740.00" font-size="16" font-weight="400" fill="#9b9b9b">0</text>
<text x="1511.20" y="740.00" font-size="16" font-weight="400" fill="#9b9b9b">21</text>
<text x="1613.60" y="740.00" font-size="16" font-weight="400" fill="#9b9b9b">16</text>
<text x="1717.50" y="740.00" font-size="16" font-weight="400" fill="#9b9b9b">135</text>
<text x="1822.40" y="740.00" font-size="16" font-weight="400" fill="#9b9b9b">0.0833</text>
<text x="1439.15" y="1002.90" font-size="17" font-weight="400" fill="#ffffff" textLength="98.34" lengthAdjust="spacingAndGlyphs" stroke="#ffffff" stroke-width="0.3">PARAMETERS</text>
<text x="1624.70" y="1002.90" font-size="17" font-weight="400" fill="#444" textLength="72.79" lengthAdjust="spacingAndGlyphs" stroke="#444" stroke-width="0.2">SETTINGS</text>
<text x="1779.75" y="1002.90" font-size="17" font-weight="400" fill="#444" textLength="107.74" lengthAdjust="spacingAndGlyphs" stroke="#444" stroke-width="0.2">DATA OVERLAY</text>
<path d="M494.40,616.00 L496.46,207.37 L498.51,238.09 L500.57,258.19 L502.63,272.11 L504.69,282.97 L506.74,292.39 L508.80,301.10 L510.86,309.43 L512.91,317.49 L514.97,325.33 L517.03,332.97 L519.09,340.42 L521.14,347.66 L523.20,354.70 L525.26,361.53 L527.31,368.16 L529.37,374.57 L531.43,380.77 L533.49,386.77 L535.54,392.56 L537.60,398.15 L539.66,403.53 L541.71,408.73 L543.77,413.73 L545.83,418.56 L547.89,203.51 L549.94,232.66 L552.00,251.52 L554.06,264.54 L556.11,274.71 L558.17,283.52 L560.23,291.66 L562.29,299.41 L564.34,306.89 L566.40,314.13 L568.46,321.16 L570.51,327.97 L572.57,334.57 L574.63,340.97 L576.69,347.15 L578.74,353.13 L580.80,358.89 L582.86,364.46 L584.92,369.83 L586.97,375.00 L589.03,379.99 L591.09,384.80 L593.14,389.43 L595.20,393.90 L597.26,398.22 L599.32,202.30 L601.37,230.92 L603.43,249.37 L605.49,262.07 L607.54,271.97 L609.60,280.55 L611.66,288.46 L613.72,295.98 L615.77,303.23 L617.83,310.23 L619.89,317.02 L621.94,323.60 L624.00,329.96 L626.06,336.11 L628.12,342.06 L630.17,347.79 L632.23,353.33 L634.29,358.67 L636.34,363.81 L638.40,368.77 L640.46,373.55 L642.52,378.16 L644.57,382.61 L646.63,386.91 L648.69,391.05 L650.74,201.79 L652.80,230.20 L654.86,248.47 L656.92,261.04 L658.97,270.83 L661.03,279.31 L663.09,287.13 L665.14,294.55 L667.20,301.70 L669.26,308.62 L671.32,315.31 L673.37,321.79 L675.43,328.05 L677.49,334.11 L679.54,339.96 L681.60,345.60 L683.66,351.04 L685.72,356.29 L687.77,361.35 L689.83,366.23 L691.89,370.93 L693.94,375.46 L696.00,379.84 L698.06,384.07 L700.12,388.15 L702.17,201.57 L704.23,229.89 L706.29,248.08 L708.34,260.59 L710.40,270.34 L712.46,278.78 L714.52,286.55 L716.57,293.94 L718.63,301.05 L720.69,307.93 L722.74,314.58 L724.80,321.02 L726.86,327.24 L728.92,333.26 L730.97,339.06 L733.03,344.67 L735.09,350.07 L737.14,355.28 L739.20,360.31 L741.26,365.15 L743.32,369.82 L745.37,374.32 L747.43,378.67 L749.49,382.86 L751.54,386.92 L753.60,201.48 L755.66,229.75 L757.72,247.91 L759.77,260.40 L761.83,270.13 L763.89,278.55 L765.95,286.31 L768.00,293.68 L770.06,300.77 L772.12,307.63 L774.17,314.26 L776.23,320.68 L778.29,326.89 L780.35,332.89 L782.40,338.68 L784.46,344.27 L786.52,349.65 L788.57,354.85 L790.63,359.86 L792.69,364.69 L794.75,369.34 L796.80,373.83 L798.86,378.16 L800.92,382.35 L802.97,386.39 L805.03,201.43 L807.09,229.69 L809.15,247.84 L811.20,260.32 L813.26,270.03 L815.32,278.45 L817.37,286.20 L819.43,293.57 L821.49,300.65 L823.55,307.50 L825.60,314.13 L827.66,320.54 L829.72,326.74 L831.77,332.73 L833.83,338.51 L835.89,344.09 L837.95,349.47 L840.00,354.66 L842.06,359.66 L844.12,364.49 L846.17,369.13 L848.23,373.62 L850.29,377.95 L852.35,382.13 L854.40,386.17 L856.46,201.42 L858.52,229.67 L860.57,247.81 L862.63,260.28 L864.69,269.99 L866.75,278.40 L868.80,286.15 L870.86,293.52 L872.92,300.60 L874.97,307.44 L877.03,314.07 L879.09,320.47 L881.15,326.67 L883.20,332.66 L885.26,338.44 L887.32,344.02 L889.37,349.40 L891.43,354.58 L893.49,359.58 L895.55,364.40 L897.60,369.04 L899.66,373.53 L901.72,377.85 L903.77,382.03 L905.83,386.07 L907.89,201.41 L909.95,229.65 L912.00,247.79 L914.06,260.27 L916.12,269.98 L918.17,278.38 L920.23,286.13 L922.29,293.49 L924.35,300.58 L926.40,307.42 L928.46,314.04 L930.52,320.45 L932.58,326.64 L934.63,332.63 L936.69,338.41 L938.75,343.98 L940.80,349.36 L942.86,354.55 L944.92,359.54 L946.98,364.36 L949.03,369.01 L951.09,373.49 L953.15,377.81 L955.20,381.99 L957.26,386.03 L959.32,201.41 L961.38,229.65 L963.43,247.79 L965.49,260.26 L967.55,269.97 L969.60,278.38 L971.66,286.13 L973.72,293.49 L975.78,300.57 L977.83,307.41 L979.89,314.03 L981.95,320.44 L984.00,326.63 L986.06,332.62 L988.12,338.39 L990.18,343.97 L992.23,349.35 L994.29,354.53 L996.35,359.53 L998.40,364.34 L1000.46,368.99 L1002.52,373.47 L1004.58,377.79 L1006.63,381.97 L1008.69,386.01 L1010.75,201.40 L1012.80,229.65 L1014.86,247.78 L1016.92,260.26 L1018.98,269.97 L1021.03,278.37 L1023.09,286.12 L1025.15,293.48 L1027.20,300.56 L1029.26,307.40 L1031.32,314.02 L1033.38,320.43 L1035.43,326.63 L1037.49,332.61 L1039.55,338.39 L1041.60,343.96 L1043.66,349.34 L1045.72,354.52 L1047.78,359.52 L1049.83,364.34 L1051.89,368.98 L1053.95,373.46 L1056.00,377.78 L1058.06,381.96 L1060.12,386.00 L1062.18,201.40 L1064.23,229.65 L1066.29,247.78 L1068.35,260.25 L1070.40,269.97 L1072.46,278.37 L1074.52,286.12 L1076.58,293.48 L1078.63,300.56 L1080.69,307.40 L1082.75,314.02 L1084.80,320.43 L1086.86,326.62 L1088.92,332.61 L1090.98,338.39 L1093.03,343.96 L1095.09,349.34 L1097.15,354.52 L1099.21,359.52 L1101.26,364.33 L1103.32,368.98 L1105.38,373.46 L1107.43,377.78 L1109.49,381.96 L1111.55,385.99 L1113.61,201.40 L1115.66,229.65 L1117.72,247.78 L1119.78,260.25 L1121.83,269.96 L1123.89,278.37 L1125.95,286.12 L1128.01,293.48 L1130.06,300.56 L1132.12,307.40 L1134.18,314.02 L1136.23,320.43 L1138.29,326.62 L1140.35,332.61 L1142.41,338.38 L1144.46,343.96 L1146.52,349.34 L1148.58,354.52 L1150.63,359.52 L1152.69,364.33 L1154.75,368.98 L1156.81,373.46 L1158.86,377.78 L1160.92,381.96 L1162.98,385.99 L1165.03,201.40 L1167.09,229.65 L1169.15,247.78 L1171.21,260.25 L1173.26,269.96 L1175.32,278.37 L1177.38,286.12 L1179.43,293.48 L1181.49,300.56 L1183.55,307.40 L1185.61,314.02 L1187.66,320.43 L1189.72,326.62 L1191.78,332.61 L1193.83,338.38 L1195.89,343.96 L1197.95,349.34 L1200.01,354.52 L1202.06,359.52 L1204.12,364.33 L1206.18,368.98 L1208.23,373.46 L1210.29,377.78 L1212.35,381.96 L1214.41,385.99 L1216.46,201.40 L1218.52,229.65 L1220.58,247.78 L1222.63,260.25 L1224.69,269.96 L1226.75,278.37 L1228.81,286.12 L1230.86,293.48 L1232.92,300.56 L1234.98,307.40 L1237.03,314.02 L1239.09,320.43 L1241.15,326.62 L1243.21,332.61 L1245.26,338.38 L1247.32,343.96 L1249.38,349.34 L1251.43,354.52 L1253.49,359.52 L1255.55,364.33 L1257.61,368.98 L1259.66,373.46 L1261.72,377.78 L1263.78,381.96 L1265.84,385.99 L1267.89,201.40 L1269.95,229.65 L1272.01,247.78 L1274.06,260.25 L1276.12,269.96 L1278.18,278.37 L1280.24,286.12 L1282.29,293.48 L1284.35,300.56 L1286.41,307.40 L1288.46,314.02 L1290.52,320.43 L1292.58,326.62 L1294.64,332.61 L1296.69,338.38 L1298.75,343.96 L1300.81,349.34 L1302.86,354.52 L1304.92,359.52 L1306.98,364.33 L1309.04,368.98 L1311.09,373.46 L1313.15,377.78 L1315.21,381.96 L1317.26,385.99" fill="none" stroke="#1f77b4" stroke-width="1.1" stroke-linejoin="round" clip-path="url(#c1)"/>
<path d="M494.40,1030.20 L496.46,618.33 L498.51,615.60 L500.57,619.17 L502.63,627.25 L504.69,637.29 L506.74,647.97 L508.80,658.63 L510.86,669.01 L512.91,678.98 L514.97,688.53 L517.03,697.70 L519.09,706.52 L521.14,715.03 L523.20,723.27 L525.26,731.26 L527.31,739.03 L529.37,746.59 L531.43,753.97 L533.49,761.17 L535.54,768.21 L537.60,775.08 L539.66,781.80 L541.71,788.38 L543.77,794.81 L545.83,801.10 L547.89,623.43 L549.94,620.70 L552.00,624.04 L554.06,631.57 L556.11,640.93 L558.17,650.89 L560.23,660.84 L562.29,670.51 L564.34,679.81 L566.40,688.72 L568.46,697.27 L570.51,705.49 L572.57,713.43 L574.63,721.11 L576.69,728.56 L578.74,735.81 L580.80,742.86 L582.86,749.74 L584.92,756.46 L586.97,763.02 L589.03,769.43 L591.09,775.70 L593.14,781.83 L595.20,787.82 L597.26,793.69 L599.32,627.23 L601.37,624.51 L603.43,627.78 L605.49,635.16 L607.54,644.34 L609.60,654.10 L611.66,663.85 L613.72,673.33 L615.77,682.45 L617.83,691.19 L619.89,699.57 L621.94,707.63 L624.00,715.41 L626.06,722.94 L628.12,730.24 L630.17,737.34 L632.23,744.26 L634.29,751.01 L636.34,757.59 L638.40,764.02 L640.46,770.31 L642.52,776.45 L644.57,782.46 L646.63,788.34 L648.69,794.09 L650.74,630.44 L652.80,627.71 L654.86,630.96 L656.92,638.29 L658.97,647.41 L661.03,657.11 L663.09,666.80 L665.14,676.22 L667.20,685.28 L669.26,693.96 L671.32,702.28 L673.37,710.29 L675.43,718.02 L677.49,725.50 L679.54,732.76 L681.60,739.82 L683.66,746.69 L685.72,753.39 L687.77,759.93 L689.83,766.32 L691.89,772.56 L693.94,778.67 L696.00,784.64 L698.06,790.48 L700.12,796.20 L702.17,632.94 L704.23,630.21 L706.29,633.46 L708.34,640.78 L710.40,649.88 L712.46,659.56 L714.52,669.23 L716.57,678.64 L718.63,687.68 L720.69,696.34 L722.74,704.65 L724.80,712.65 L726.86,720.36 L728.92,727.83 L730.97,735.08 L733.03,742.12 L735.09,748.98 L737.14,755.67 L739.20,762.20 L741.26,768.58 L743.32,774.81 L745.37,780.90 L747.43,786.86 L749.49,792.69 L751.54,798.40 L753.60,635.04 L755.66,632.32 L757.72,635.56 L759.77,642.89 L761.83,652.00 L763.89,661.70 L765.95,671.38 L768.00,680.80 L770.06,689.85 L772.12,698.52 L774.17,706.85 L776.23,714.85 L778.29,722.57 L780.35,730.05 L782.40,737.30 L784.46,744.35 L786.52,751.22 L788.57,757.92 L790.63,764.46 L792.69,770.84 L794.75,777.08 L796.80,783.18 L798.86,789.15 L800.92,794.99 L802.97,800.70 L805.03,637.15 L807.09,634.42 L809.15,637.66 L811.20,645.00 L813.26,654.11 L815.32,663.80 L817.37,673.48 L819.43,682.90 L821.49,691.95 L823.55,700.62 L825.60,708.95 L827.66,716.95 L829.72,724.68 L831.77,732.15 L833.83,739.40 L835.89,746.46 L837.95,753.32 L840.00,760.02 L842.06,766.56 L844.12,772.95 L846.17,779.19 L848.23,785.29 L850.29,791.25 L852.35,797.09 L854.40,802.80 L856.46,638.85 L858.52,636.12 L860.57,639.36 L862.63,646.68 L864.69,655.79 L866.75,665.47 L868.80,675.14 L870.86,684.54 L872.92,693.58 L874.97,702.25 L877.03,710.56 L879.09,718.56 L881.15,726.27 L883.20,733.74 L885.26,740.98 L887.32,748.03 L889.37,754.88 L891.43,761.57 L893.49,768.10 L895.55,774.48 L897.60,780.72 L899.66,786.81 L901.72,792.77 L903.77,798.60 L905.83,804.31 L907.89,640.35 L909.95,637.62 L912.00,640.86 L914.06,648.18 L916.12,657.28 L918.17,666.95 L920.23,676.62 L922.29,686.02 L924.35,695.05 L926.40,703.71 L928.46,712.02 L930.52,720.01 L932.58,727.72 L934.63,735.18 L936.69,742.42 L938.75,749.46 L940.80,756.32 L942.86,763.00 L944.92,769.53 L946.98,775.90 L949.03,782.13 L951.09,788.22 L953.15,794.18 L955.20,800.00 L957.26,805.71 L959.32,641.35 L961.38,638.62 L963.43,641.88 L965.49,649.23 L967.55,658.36 L969.60,668.07 L971.66,677.78 L973.72,687.22 L975.78,696.29 L977.83,704.99 L979.89,713.33 L981.95,721.35 L984.00,729.10 L986.06,736.59 L988.12,743.86 L990.18,750.93 L992.23,757.81 L994.29,764.53 L996.35,771.08 L998.40,777.48 L1000.46,783.73 L1002.52,789.85 L1004.58,795.83 L1006.63,801.68 L1008.69,807.41 L1010.75,642.85 L1012.80,640.13 L1014.86,643.37 L1016.92,650.70 L1018.98,659.81 L1021.03,669.51 L1023.09,679.19 L1025.15,688.60 L1027.20,697.66 L1029.26,706.33 L1031.32,714.65 L1033.38,722.66 L1035.43,730.38 L1037.49,737.86 L1039.55,745.11 L1041.60,752.16 L1043.66,759.03 L1045.72,765.73 L1047.78,772.27 L1049.83,778.65 L1051.89,784.89 L1053.95,790.99 L1056.00,796.96 L1058.06,802.79 L1060.12,808.51 L1062.18,643.85 L1064.23,641.13 L1066.29,644.37 L1068.35,651.70 L1070.40,660.81 L1072.46,670.51 L1074.52,680.19 L1076.58,689.61 L1078.63,698.66 L1080.69,707.33 L1082.75,715.65 L1084.80,723.66 L1086.86,731.38 L1088.92,738.86 L1090.98,746.11 L1093.03,753.16 L1095.09,760.03 L1097.15,766.73 L1099.21,773.27 L1101.26,779.65 L1103.32,785.89 L1105.38,791.99 L1107.43,797.96 L1109.49,803.80 L1111.55,809.51 L1113.61,644.95 L1115.66,642.23 L1117.72,645.47 L1119.78,652.80 L1121.83,661.92 L1123.89,671.61 L1125.95,681.29 L1128.01,690.71 L1130.06,699.76 L1132.12,708.43 L1134.18,716.76 L1136.23,724.76 L1138.29,732.49 L1140.35,739.96 L1142.41,747.21 L1144.46,754.26 L1146.52,761.13 L1148.58,767.83 L1150.63,774.37 L1152.69,780.75 L1154.75,786.99 L1156.81,793.10 L1158.86,799.06 L1160.92,804.90 L1162.98,810.61 L1165.03,645.76 L1167.09,643.03 L1169.15,646.28 L1171.21,653.62 L1173.26,662.74 L1175.32,672.44 L1177.38,682.14 L1179.43,691.57 L1181.49,700.63 L1183.55,709.31 L1185.61,717.65 L1187.66,725.66 L1189.72,733.39 L1191.78,740.88 L1193.83,748.14 L1195.89,755.20 L1197.95,762.08 L1200.01,768.78 L1202.06,775.33 L1204.12,781.72 L1206.18,787.97 L1208.23,794.08 L1210.29,800.05 L1212.35,805.89 L1214.41,811.61 L1216.46,646.46 L1218.52,643.73 L1220.58,646.99 L1222.63,654.34 L1224.69,663.49 L1226.75,673.21 L1228.81,682.93 L1230.86,692.38 L1232.92,701.46 L1234.98,710.17 L1237.03,718.52 L1239.09,726.56 L1241.15,734.31 L1243.21,741.81 L1245.26,749.09 L1247.32,756.17 L1249.38,763.06 L1251.43,769.78 L1253.49,776.34 L1255.55,782.75 L1257.61,789.01 L1259.66,795.14 L1261.72,801.12 L1263.78,806.98 L1265.84,812.72 L1267.89,647.26 L1269.95,644.53 L1272.01,647.79 L1274.06,655.16 L1276.12,664.31 L1278.18,674.05 L1280.24,683.78 L1282.29,693.24 L1284.35,702.33 L1286.41,711.05 L1288.46,719.41 L1290.52,727.46 L1292.58,735.22 L1294.64,742.73 L1296.69,750.01 L1298.75,757.10 L1300.81,764.00 L1302.86,770.73 L1304.92,777.30 L1306.98,783.72 L1309.04,789.99 L1311.09,796.12 L1313.15,802.11 L1315.21,807.97 L1317.26,813.72" fill="none" stroke="#1f77b4" stroke-width="1.1" stroke-linejoin="round" clip-path="url(#c2)"/>
</svg>
</body></html>
